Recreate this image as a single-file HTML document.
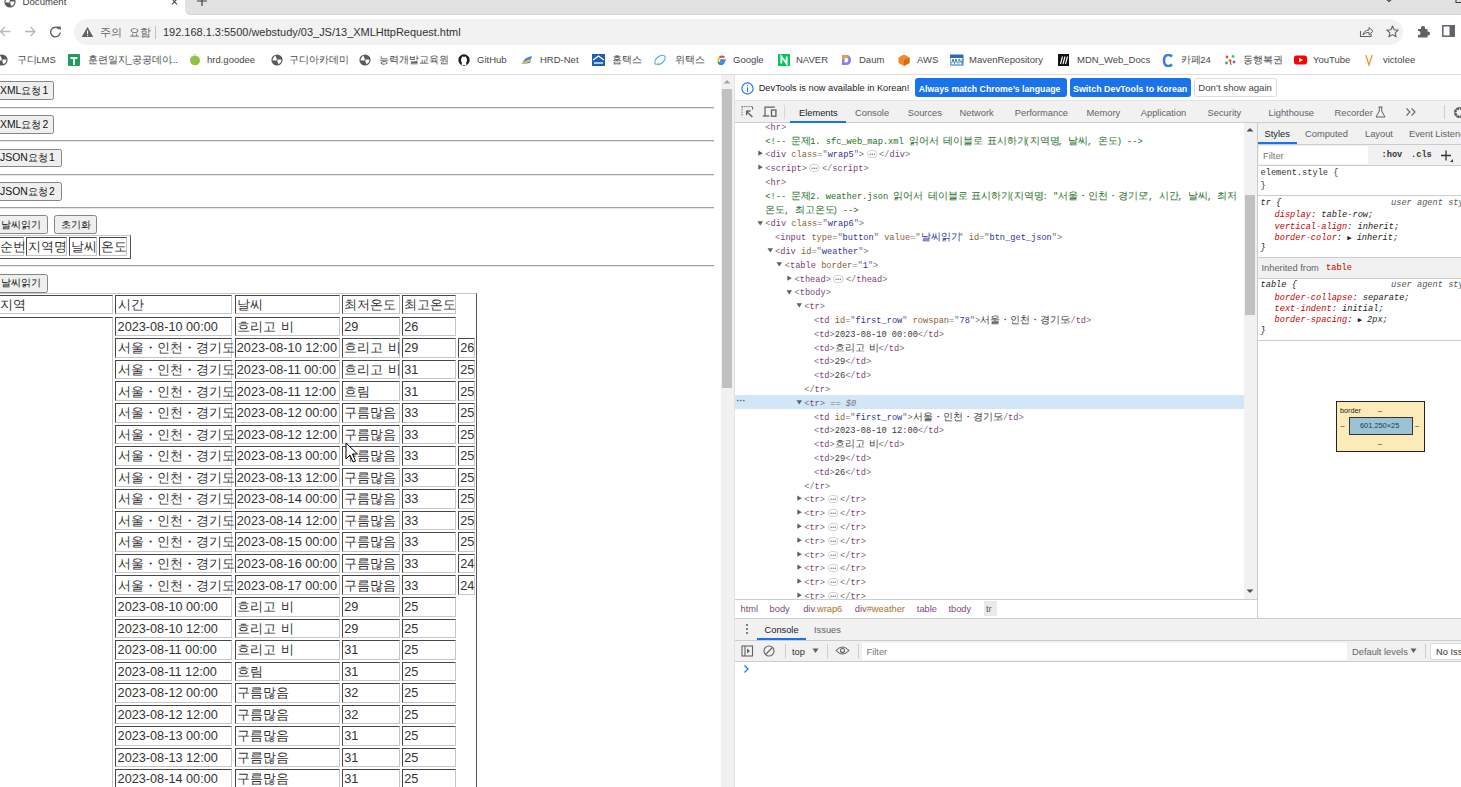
<!DOCTYPE html>
<html><head><meta charset="utf-8"><title>Document</title>
<style>
html,body{margin:0;padding:0;width:1461px;height:787px;overflow:hidden;background:#fff;position:relative}
.r{position:absolute;display:block}
.t{position:absolute;white-space:pre;}
.s{font-family:"Liberation Sans",sans-serif}
.m{font-family:"Liberation Mono",monospace}
.k{display:inline-block;white-space:pre;overflow:visible;vertical-align:baseline;line-height:0}
.ko .k{font-size:inherit!important}
.ko .kc{font-size:10.2px!important}
.dots{display:inline-block;vertical-align:-1px;margin:0 2px 0 2.5px}
</style></head><body>
<div class="r" style="left:185px;top:0px;width:1276px;height:15px;background:#e1e1e1;border-bottom:1px solid #d2d2d2;box-sizing:border-box;border-bottom-left-radius:6px"></div>
<svg class="r" style="left:3.5px;top:-4.5px;" width="13" height="13" viewBox="0 0 13 13"><defs><clipPath id="gt"><circle cx="6" cy="6" r="4.4"/></clipPath></defs><circle cx="6" cy="6" r="5.6" fill="#5a5a5a"/><g clip-path="url(#gt)"><path d="M0 6.6 L0 0 L5.4 0 Q4.2 2.2 5.2 3.6 Q6.2 4.6 5.4 6.6 Z M6.6 5.4 L12 5.4 L12 12 L6.6 12 Q7.8 9.8 6.8 8.4 Q5.8 7.4 6.6 5.4 Z" fill="#fff"/></g></svg>
<div class="t s" style="left:22.6px;top:-4.00px;font-size:9.6px;line-height:12px;color:#3c4043;">Document</div>
<svg class="r" style="left:171px;top:-2px;" width="7" height="8" viewBox="0 0 7 8"><path d="M1 1 L6 6.5 M6 1 L1 6.5" stroke="#3c4043" stroke-width="1.1"/></svg>
<svg class="r" style="left:196px;top:-4px;" width="12" height="11" viewBox="0 0 12 11"><path d="M6 0 V10 M1 5 H11" stroke="#3c4043" stroke-width="1.2"/></svg>
<svg class="r" style="left:1384px;top:-3px;" width="10" height="6" viewBox="0 0 10 6"><path d="M1 1 L5 4.5 L9 1" stroke="#3c4043" stroke-width="1.1" fill="none"/></svg>
<svg class="r" style="left:1455px;top:-4px;" width="6" height="8" viewBox="0 0 6 8"><path d="M1 0 V6.5 H6" stroke="#3c4043" stroke-width="1.1" fill="none"/></svg>
<svg class="r" style="left:-1px;top:25px;" width="13" height="13" viewBox="0 0 13 13"><path d="M11.5 6.5 H1.5 M6 2 L1.5 6.5 L6 11" stroke="#b5b7ba" stroke-width="1.3" fill="none"/></svg>
<svg class="r" style="left:23.5px;top:25px;" width="13" height="13" viewBox="0 0 13 13"><path d="M1 6.5 H11 M6.5 2 L11 6.5 L6.5 11" stroke="#b5b7ba" stroke-width="1.3" fill="none"/></svg>
<svg class="r" style="left:49px;top:25px;" width="13" height="13" viewBox="0 0 13 13"><path d="M10.3 4.2 A4.8 4.8 0 1 0 11.2 7.5" stroke="#5f6368" stroke-width="1.4" fill="none"/><path d="M8 1.5 L11.8 1.5 L11.8 5.3 Z" fill="#5f6368"/></svg>
<div class="r" style="left:74.3px;top:18.8px;width:1329px;height:26.2px;background:#f2f2f2;border-radius:13px"></div>
<svg class="r" style="left:81px;top:26px;" width="13" height="12" viewBox="0 0 13 12"><path d="M6.5 1 L12.3 11 H0.7 Z" fill="#5f6368"/><rect x="6" y="4.5" width="1.1" height="3.6" fill="#fff"/><rect x="6" y="9" width="1.1" height="1.1" fill="#fff"/></svg>
<div class="t s" style="left:100px;top:24.50px;font-size:10.6px;line-height:14px;color:#5f6368;"><span class="k" style="width:21.80px;font-size:13.78px">주의</span><span class="k" style="width:6.76px"> </span><span class="k" style="width:21.80px;font-size:13.78px">요함</span></div>
<div class="r" style="left:155px;top:25.5px;width:1px;height:13px;background:#bdc1c6"></div>
<div class="t s" style="left:163px;top:24.50px;font-size:10.97px;line-height:14px;color:#333;">192.168.1.3:5500/webstudy/03_JS/13_XMLHttpRequest.html</div>
<svg class="r" style="left:1359px;top:25px;" width="15" height="13" viewBox="0 0 15 13"><path d="M1.5 6 V11.5 H12 V9" stroke="#5f6368" stroke-width="1.1" fill="none"/><path d="M4 10 Q5 5 10 5 V2.5 L14 6.2 L10 9.8 V7.3 Q6 7.3 4 10 Z" stroke="#5f6368" stroke-width="1" fill="none"/></svg>
<svg class="r" style="left:1386px;top:24.5px;" width="13" height="13" viewBox="0 0 13 13"><path d="M6.5 1 L8.1 4.8 L12.2 5.1 L9.1 7.8 L10.1 11.8 L6.5 9.6 L2.9 11.8 L3.9 7.8 L0.8 5.1 L4.9 4.8 Z" stroke="#5f6368" stroke-width="1.1" fill="none" stroke-linejoin="round"/></svg>
<svg class="r" style="left:1416px;top:25px;" width="14" height="13" viewBox="0 0 14 13"><path d="M2 4 H5 Q4.5 1 7 1 Q9.5 1 9 4 H11.5 V6.5 Q14 6 14 8.5 Q14 11 11.5 10.5 V12.5 H2 V10 Q4.5 10.5 4.5 8 Q4.5 5.7 2 6 Z" fill="#5f6368"/></svg>
<svg class="r" style="left:1442px;top:25px;" width="13" height="12" viewBox="0 0 13 12"><rect x="0.8" y="0.8" width="11.4" height="10.4" stroke="#5f6368" stroke-width="1.5" fill="none"/><rect x="7.5" y="1" width="4.5" height="10" fill="#5f6368"/></svg>
<svg class="r" style="left:-4px;top:53.5px;" width="14" height="13" viewBox="0 0 14 13"><defs><clipPath id="gc"><circle cx="6" cy="6" r="4.4"/></clipPath></defs><circle cx="6" cy="6" r="5.6" fill="#5a5a5a"/><g clip-path="url(#gc)"><path d="M0 6.6 L0 0 L5.4 0 Q4.2 2.2 5.2 3.6 Q6.2 4.6 5.4 6.6 Z M6.6 5.4 L12 5.4 L12 12 L6.6 12 Q7.8 9.8 6.8 8.4 Q5.8 7.4 6.6 5.4 Z" fill="#fff"/></g></svg>
<div class="t s" style="left:17px;top:53.50px;font-size:9.5px;line-height:12px;color:#474747;"><span class="k" style="width:19.20px;font-size:12.35px">구디</span>LMS</div>
<svg class="r" style="left:68px;top:53.5px;" width="14" height="13" viewBox="0 0 14 13"><rect x="0" y="0" width="12" height="12" rx="1" fill="#1e9e5a"/><path d="M2.5 4 H9.5 M6 4 V11" stroke="#fff" stroke-width="1.8"/></svg>
<div class="t s" style="left:88px;top:53.50px;font-size:9.5px;line-height:12px;color:#474747;"><span class="k" style="width:38.40px;font-size:12.35px">훈련일지</span>_<span class="k" style="width:38.40px;font-size:12.35px">공공데이</span>...</div>
<svg class="r" style="left:189px;top:53.5px;" width="14" height="13" viewBox="0 0 14 13"><ellipse cx="6" cy="6.5" rx="5" ry="4.8" fill="#8cc43f"/><path d="M5 1.5 L6.5 0" stroke="#7a5" stroke-width="1"/></svg>
<div class="t s" style="left:207px;top:53.50px;font-size:9.5px;line-height:12px;color:#474747;">hrd.goodee</div>
<svg class="r" style="left:271px;top:53.5px;" width="14" height="13" viewBox="0 0 14 13"><defs><clipPath id="gc"><circle cx="6" cy="6" r="4.4"/></clipPath></defs><circle cx="6" cy="6" r="5.6" fill="#5a5a5a"/><g clip-path="url(#gc)"><path d="M0 6.6 L0 0 L5.4 0 Q4.2 2.2 5.2 3.6 Q6.2 4.6 5.4 6.6 Z M6.6 5.4 L12 5.4 L12 12 L6.6 12 Q7.8 9.8 6.8 8.4 Q5.8 7.4 6.6 5.4 Z" fill="#fff"/></g></svg>
<div class="t s" style="left:289px;top:53.50px;font-size:9.5px;line-height:12px;color:#474747;"><span class="k" style="width:57.60px;font-size:12.35px">구디아카데미</span></div>
<svg class="r" style="left:359px;top:53.5px;" width="14" height="13" viewBox="0 0 14 13"><defs><clipPath id="gc"><circle cx="6" cy="6" r="4.4"/></clipPath></defs><circle cx="6" cy="6" r="5.6" fill="#5a5a5a"/><g clip-path="url(#gc)"><path d="M0 6.6 L0 0 L5.4 0 Q4.2 2.2 5.2 3.6 Q6.2 4.6 5.4 6.6 Z M6.6 5.4 L12 5.4 L12 12 L6.6 12 Q7.8 9.8 6.8 8.4 Q5.8 7.4 6.6 5.4 Z" fill="#fff"/></g></svg>
<div class="t s" style="left:379px;top:53.50px;font-size:9.5px;line-height:12px;color:#474747;"><span class="k" style="width:67.20px;font-size:12.35px">능력개발교육원</span></div>
<svg class="r" style="left:458px;top:53.5px;" width="14" height="13" viewBox="0 0 14 13"><circle cx="6" cy="6" r="5.7" fill="#1b1f23"/><path d="M3.8 11 V8.5 Q3 7.5 3 6 Q3 4.2 4 3.6 Q4 2.5 4.3 2.2 Q5 2.4 5.6 3 H6.4 Q7 2.4 7.7 2.2 Q8 2.5 8 3.6 Q9 4.2 9 6 Q9 7.5 8.2 8.5 V11" fill="#fff"/><circle cx="6" cy="6" r="4.3" fill="#1b1f23" opacity="0"/></svg>
<div class="t s" style="left:477px;top:53.50px;font-size:9.5px;line-height:12px;color:#474747;">GitHub</div>
<svg class="r" style="left:521px;top:53.5px;" width="14" height="13" viewBox="0 0 14 13"><path d="M1 10 Q3 3 11 2 L9 9 Z" fill="#3b8de0"/><path d="M2 9 L10 6" stroke="#f0c030" stroke-width="2"/></svg>
<div class="t s" style="left:540px;top:53.50px;font-size:9.5px;line-height:12px;color:#474747;">HRD-Net</div>
<svg class="r" style="left:592px;top:53.5px;" width="14" height="13" viewBox="0 0 14 13"><rect x="0" y="0" width="13" height="12" fill="#1f5fae"/><path d="M1 6 L6.5 2 L12 6" stroke="#fff" stroke-width="1.3" fill="none"/><path d="M2 9 H11" stroke="#fff" stroke-width="1.3"/></svg>
<div class="t s" style="left:612px;top:53.50px;font-size:9.5px;line-height:12px;color:#474747;"><span class="k" style="width:28.80px;font-size:12.35px">홈택스</span></div>
<svg class="r" style="left:653px;top:53.5px;" width="14" height="13" viewBox="0 0 14 13"><ellipse cx="7" cy="6" rx="6" ry="3.5" transform="rotate(-40 7 6)" stroke="#55b6e0" stroke-width="1.3" fill="none"/><path d="M2 10 Q4 11 6 9" stroke="#b9d441" stroke-width="1.3" fill="none"/></svg>
<div class="t s" style="left:675px;top:53.50px;font-size:9.5px;line-height:12px;color:#474747;"><span class="k" style="width:28.80px;font-size:12.35px">위택스</span></div>
<svg class="r" style="left:715px;top:53.5px;" width="14" height="13" viewBox="0 0 14 13"><path d="M10.8 6.2 H6 V7.8 H9 Q8.5 10 6 10 Q3.8 10 3.3 7.5" stroke="#4285f4" stroke-width="1.8" fill="none"/><path d="M3.3 7.5 Q3 5 4.5 3.4" stroke="#fbbc05" stroke-width="1.8" fill="none"/><path d="M4.5 3.4 Q7 1.6 9.3 3.5" stroke="#ea4335" stroke-width="1.8" fill="none"/><path d="M3.4 8.2 Q4.5 10.6 7.5 10.2" stroke="#34a853" stroke-width="1.8" fill="none"/></svg>
<div class="t s" style="left:733px;top:53.50px;font-size:9.5px;line-height:12px;color:#474747;">Google</div>
<svg class="r" style="left:778px;top:53.5px;" width="14" height="13" viewBox="0 0 14 13"><rect x="0" y="0" width="12" height="12" fill="#03c75a"/><path d="M3.3 9.5 V2.5 L8.7 9.5 V2.5" stroke="#fff" stroke-width="1.8" fill="none"/></svg>
<div class="t s" style="left:796px;top:53.50px;font-size:9.5px;line-height:12px;color:#474747;">NAVER</div>
<svg class="r" style="left:840px;top:53.5px;" width="14" height="13" viewBox="0 0 14 13"><path d="M2 1 H6 Q11 1 11 6 Q11 11 6 11 H2 Z" fill="#8b7cf6"/><path d="M4.5 3.5 H6 Q8.3 3.5 8.3 6 Q8.3 8.5 6 8.5 H4.5 Z" fill="#fff"/><path d="M2 1 H6 Q8 1 9.5 2.5 L2 6Z" fill="#f5a623" opacity=".8"/></svg>
<div class="t s" style="left:859px;top:53.50px;font-size:9.5px;line-height:12px;color:#474747;">Daum</div>
<svg class="r" style="left:898px;top:53.5px;" width="14" height="13" viewBox="0 0 14 13"><path d="M6 0.5 L11.5 3.5 V9 L6 12 L0.5 9 V3.5 Z" fill="#f08a24"/><path d="M6 6 L11.5 3.5 V9 L6 12 Z" fill="#d96b10"/></svg>
<div class="t s" style="left:917px;top:53.50px;font-size:9.5px;line-height:12px;color:#474747;">AWS</div>
<svg class="r" style="left:950px;top:53.5px;" width="14" height="13" viewBox="0 0 14 13"><rect x="0" y="1" width="13" height="10" fill="#fff" stroke="#2b6cb0" stroke-width="1"/><rect x="0" y="1" width="13" height="3" fill="#2b6cb0"/><path d="M1.5 9.5 L3 5 L4.5 9.5 L6 5 L7.5 9.5 M9 9.5 V5 L12 9.5 V5" stroke="#2b6cb0" stroke-width=".9" fill="none"/></svg>
<div class="t s" style="left:969px;top:53.50px;font-size:9.5px;line-height:12px;color:#474747;">MavenRepository</div>
<svg class="r" style="left:1058px;top:53.5px;" width="14" height="13" viewBox="0 0 14 13"><rect x="0" y="0" width="11" height="12" fill="#111"/><path d="M2.5 10 L4.5 2.5 M5 10 L7 2.5 M7.5 10 L9.5 2.5" stroke="#fff" stroke-width="1.1"/></svg>
<div class="t s" style="left:1077px;top:53.50px;font-size:9.5px;line-height:12px;color:#474747;">MDN_Web_Docs</div>
<svg class="r" style="left:1162px;top:53.5px;" width="14" height="13" viewBox="0 0 14 13"><path d="M10 2.5 Q8.5 1 6.5 1 Q2 1 2 6.5 Q2 12 6.5 12 Q8.5 12 10 10.5" stroke="#3f7de0" stroke-width="2.6" fill="none"/></svg>
<div class="t s" style="left:1181px;top:53.50px;font-size:9.5px;line-height:12px;color:#474747;"><span class="k" style="width:19.20px;font-size:12.35px">카페</span>24</div>
<svg class="r" style="left:1224px;top:53.5px;" width="14" height="13" viewBox="0 0 14 13"><circle cx="3" cy="3" r="1.4" fill="#e74c3c"/><circle cx="9" cy="2.5" r="1.4" fill="#2ecc71"/><circle cx="6" cy="6.5" r="1.6" fill="#f39c12"/><circle cx="2.5" cy="9" r="1.4" fill="#3498db"/><circle cx="10" cy="8" r="1.4" fill="#9b59b6"/><path d="M6 6 L7 11" stroke="#c0392b" stroke-width="1"/></svg>
<div class="t s" style="left:1243px;top:53.50px;font-size:9.5px;line-height:12px;color:#474747;"><span class="k" style="width:38.40px;font-size:12.35px">동행복권</span></div>
<svg class="r" style="left:1294px;top:53.5px;" width="14" height="13" viewBox="0 0 14 13"><rect x="0" y="1.5" width="13" height="9" rx="2.2" fill="#f00"/><path d="M5 3.7 L9 6 L5 8.3 Z" fill="#fff"/></svg>
<div class="t s" style="left:1313px;top:53.50px;font-size:9.5px;line-height:12px;color:#474747;">YouTube</div>
<svg class="r" style="left:1365px;top:53.5px;" width="14" height="13" viewBox="0 0 14 13"><path d="M0.8 1 L4 11 L7.2 1" stroke="#f28c28" stroke-width="1.2" fill="none"/></svg>
<div class="t s" style="left:1383px;top:53.50px;font-size:9.5px;line-height:12px;color:#474747;">victolee</div>
<div class="r" style="left:0px;top:74px;width:1461px;height:1px;background:#dadce0"></div>
<div class="r" style="left:0;top:75px;width:720px;height:712px;background:#fff;overflow:hidden" id="pg">
<div class="r" style="left:-4px;top:31.70px;width:718px;height:1px;background:#a0a0a0"></div>
<div class="r" style="left:-4px;top:32.70px;width:718px;height:1px;background:#e6e6e6"></div>
<div class="r" style="left:-4px;top:65.00px;width:718px;height:1px;background:#a0a0a0"></div>
<div class="r" style="left:-4px;top:66.00px;width:718px;height:1px;background:#e6e6e6"></div>
<div class="r" style="left:-4px;top:98.70px;width:718px;height:1px;background:#a0a0a0"></div>
<div class="r" style="left:-4px;top:99.70px;width:718px;height:1px;background:#e6e6e6"></div>
<div class="r" style="left:-4px;top:131.60px;width:718px;height:1px;background:#a0a0a0"></div>
<div class="r" style="left:-4px;top:132.60px;width:718px;height:1px;background:#e6e6e6"></div>
<div class="r" style="left:-4px;top:189.80px;width:718px;height:1px;background:#a0a0a0"></div>
<div class="r" style="left:-4px;top:190.80px;width:718px;height:1px;background:#e6e6e6"></div>
<div class="r" style="left:-10px;top:6.30px;width:64.3px;height:19.200000000000003px;background:#efefef;border:1px solid #858585;border-radius:2.5px;box-sizing:border-box"></div>
<div class="t s" style="left:0px;top:7.90px;font-size:10.4px;line-height:16px;color:#111;">XML<span class="k" style="width:21.20px;font-size:13.52px">요청</span>1</div>
<div class="r" style="left:-10px;top:40.30px;width:64.3px;height:18.39999999999999px;background:#efefef;border:1px solid #858585;border-radius:2.5px;box-sizing:border-box"></div>
<div class="t s" style="left:0px;top:41.50px;font-size:10.4px;line-height:16px;color:#111;">XML<span class="k" style="width:21.20px;font-size:13.52px">요청</span>2</div>
<div class="r" style="left:-10px;top:73.60px;width:71.6px;height:18.599999999999994px;background:#efefef;border:1px solid #858585;border-radius:2.5px;box-sizing:border-box"></div>
<div class="t s" style="left:0px;top:74.90px;font-size:10.4px;line-height:16px;color:#111;">JSON<span class="k" style="width:21.20px;font-size:13.52px">요청</span>1</div>
<div class="r" style="left:-10px;top:107.40px;width:71.6px;height:18.19999999999999px;background:#efefef;border:1px solid #858585;border-radius:2.5px;box-sizing:border-box"></div>
<div class="t s" style="left:0px;top:108.50px;font-size:10.4px;line-height:16px;color:#111;">JSON<span class="k" style="width:21.20px;font-size:13.52px">요청</span>2</div>
<div class="r" style="left:-10px;top:140.40px;width:57.9px;height:18.400000000000006px;background:#efefef;border:1px solid #858585;border-radius:2.5px;box-sizing:border-box"></div>
<div class="t s" style="left:1px;top:141.60px;font-size:10.4px;line-height:16px;color:#111;"><span class="k" style="width:42.40px;font-size:13.52px">날씨읽기</span></div>
<div class="r" style="left:53.7px;top:140.40px;width:43.7px;height:18.400000000000006px;background:#efefef;border:1px solid #858585;border-radius:2.5px;box-sizing:border-box"></div>
<div class="t s" style="left:60.5px;top:141.60px;font-size:10.4px;line-height:16px;color:#111;"><span class="k" style="width:31.80px;font-size:13.52px">초기화</span></div>
<div class="r" style="left:-10px;top:198.50px;width:58px;height:19.100000000000023px;background:#efefef;border:1px solid #858585;border-radius:2.5px;box-sizing:border-box"></div>
<div class="t s" style="left:1px;top:200.05px;font-size:10.4px;line-height:16px;color:#111;"><span class="k" style="width:42.40px;font-size:13.52px">날씨읽기</span></div>
<div class="r" style="left:-10px;top:159.50px;width:140.5px;height:24px;border:1px solid;border-color:#c6c6c6 #555 #555 #c6c6c6;box-sizing:border-box"></div>
<div class="r" style="left:-10px;top:162.00px;width:34.4px;height:19.4px;border:1px solid;border-color:#474747 #c6c6c6 #c6c6c6 #474747;box-sizing:border-box"></div>
<div class="t s" style="left:0px;top:163.80px;font-size:12.7px;line-height:16px;color:#333;"><span class="k" style="width:24.40px;font-size:16.51px">순번</span></div>
<div class="r" style="left:26px;top:162.00px;width:41.400000000000006px;height:19.4px;border:1px solid;border-color:#474747 #c6c6c6 #c6c6c6 #474747;box-sizing:border-box"></div>
<div class="t s" style="left:27.6px;top:163.80px;font-size:12.7px;line-height:16px;color:#333;"><span class="k" style="width:36.60px;font-size:16.51px">지역명</span></div>
<div class="r" style="left:69.2px;top:162.00px;width:28.200000000000003px;height:19.4px;border:1px solid;border-color:#474747 #c6c6c6 #c6c6c6 #474747;box-sizing:border-box"></div>
<div class="t s" style="left:70.8px;top:163.80px;font-size:12.7px;line-height:16px;color:#333;"><span class="k" style="width:24.40px;font-size:16.51px">날씨</span></div>
<div class="r" style="left:99.1px;top:162.00px;width:28.10000000000001px;height:19.4px;border:1px solid;border-color:#474747 #c6c6c6 #c6c6c6 #474747;box-sizing:border-box"></div>
<div class="t s" style="left:100.69999999999999px;top:163.80px;font-size:12.7px;line-height:16px;color:#333;"><span class="k" style="width:24.40px;font-size:16.51px">온도</span></div>
<div class="r" style="left:-10px;top:217.70px;width:486.5px;height:520px;border:1px solid;border-color:#c6c6c6 #555 #555 #c6c6c6;box-sizing:border-box"></div>
<div class="r" style="left:-10px;top:220.40px;width:123.4px;height:19.0px;border:1px solid;border-color:#474747 #c6c6c6 #c6c6c6 #474747;box-sizing:border-box"></div>
<div class="t s" style="left:0px;top:222.20px;font-size:12.7px;line-height:16px;color:#333;"><span class="k" style="width:24.40px;font-size:16.51px">지역</span></div>
<div class="r" style="left:115.4px;top:220.40px;width:117.0px;height:19.0px;border:1px solid;border-color:#474747 #c6c6c6 #c6c6c6 #474747;box-sizing:border-box"></div>
<div class="t s" style="left:117.60000000000001px;top:222.20px;font-size:12.7px;line-height:16px;color:#333;"><span class="k" style="width:24.40px;font-size:16.51px">시간</span></div>
<div class="r" style="left:234.6px;top:220.40px;width:105.00000000000003px;height:19.0px;border:1px solid;border-color:#474747 #c6c6c6 #c6c6c6 #474747;box-sizing:border-box"></div>
<div class="t s" style="left:236.79999999999998px;top:222.20px;font-size:12.7px;line-height:16px;color:#333;"><span class="k" style="width:24.40px;font-size:16.51px">날씨</span></div>
<div class="r" style="left:342px;top:220.40px;width:58.39999999999998px;height:19.0px;border:1px solid;border-color:#474747 #c6c6c6 #c6c6c6 #474747;box-sizing:border-box"></div>
<div class="t s" style="left:344.2px;top:222.20px;font-size:12.7px;line-height:16px;color:#333;"><span class="k" style="width:48.80px;font-size:16.51px">최저온도</span></div>
<div class="r" style="left:402px;top:220.40px;width:54.19999999999999px;height:19.0px;border:1px solid;border-color:#474747 #c6c6c6 #c6c6c6 #474747;box-sizing:border-box"></div>
<div class="t s" style="left:404.2px;top:222.20px;font-size:12.7px;line-height:16px;color:#333;"><span class="k" style="width:48.80px;font-size:16.51px">최고온도</span></div>
<div class="r" style="left:-10px;top:241.80px;width:123.4px;height:520px;border:1px solid;border-color:#474747 #c6c6c6 #c6c6c6 #474747;box-sizing:border-box"></div>
<div class="r" style="left:115.4px;top:241.80px;width:117.0px;height:19.600000000000023px;border:1px solid;border-color:#474747 #c6c6c6 #c6c6c6 #474747;box-sizing:border-box"></div>
<div class="t s" style="left:117.60000000000001px;top:243.90px;font-size:12.7px;line-height:16px;color:#333;">2023-08-10 00:00</div>
<div class="r" style="left:234.6px;top:241.80px;width:105.00000000000003px;height:19.600000000000023px;border:1px solid;border-color:#474747 #c6c6c6 #c6c6c6 #474747;box-sizing:border-box"></div>
<div class="t s" style="left:236.79999999999998px;top:243.90px;font-size:12.7px;line-height:16px;color:#333;"><span class="k" style="width:36.60px;font-size:16.51px">흐리고</span><span class="k" style="width:7.56px"> </span><span class="k" style="width:12.20px;font-size:16.51px">비</span></div>
<div class="r" style="left:342px;top:241.80px;width:58.39999999999998px;height:19.600000000000023px;border:1px solid;border-color:#474747 #c6c6c6 #c6c6c6 #474747;box-sizing:border-box"></div>
<div class="t s" style="left:344.2px;top:243.90px;font-size:12.7px;line-height:16px;color:#333;">29</div>
<div class="r" style="left:402px;top:241.80px;width:54.19999999999999px;height:19.600000000000023px;border:1px solid;border-color:#474747 #c6c6c6 #c6c6c6 #474747;box-sizing:border-box"></div>
<div class="t s" style="left:404.2px;top:243.90px;font-size:12.7px;line-height:16px;color:#333;">26</div>
<div class="r" style="left:115.4px;top:263.35px;width:117.0px;height:19.600000000000023px;border:1px solid;border-color:#474747 #c6c6c6 #c6c6c6 #474747;box-sizing:border-box"></div>
<div class="t s" style="left:117.60000000000001px;top:265.45px;font-size:12.7px;line-height:16px;color:#333;"><span class="k" style="width:109.80px;font-size:16.51px">서울・인천・경기도</span></div>
<div class="r" style="left:234.6px;top:263.35px;width:105.00000000000003px;height:19.600000000000023px;border:1px solid;border-color:#474747 #c6c6c6 #c6c6c6 #474747;box-sizing:border-box"></div>
<div class="t s" style="left:236.79999999999998px;top:265.45px;font-size:12.7px;line-height:16px;color:#333;">2023-08-10 12:00</div>
<div class="r" style="left:342px;top:263.35px;width:58.39999999999998px;height:19.600000000000023px;border:1px solid;border-color:#474747 #c6c6c6 #c6c6c6 #474747;box-sizing:border-box"></div>
<div class="t s" style="left:344.2px;top:265.45px;font-size:12.7px;line-height:16px;color:#333;"><span class="k" style="width:36.60px;font-size:16.51px">흐리고</span><span class="k" style="width:7.56px"> </span><span class="k" style="width:12.20px;font-size:16.51px">비</span></div>
<div class="r" style="left:402px;top:263.35px;width:54.19999999999999px;height:19.600000000000023px;border:1px solid;border-color:#474747 #c6c6c6 #c6c6c6 #474747;box-sizing:border-box"></div>
<div class="t s" style="left:404.2px;top:265.45px;font-size:12.7px;line-height:16px;color:#333;">29</div>
<div class="r" style="left:458.1px;top:263.35px;width:16.69999999999999px;height:19.600000000000023px;border:1px solid;border-color:#474747 #c6c6c6 #c6c6c6 #474747;box-sizing:border-box"></div>
<div class="t s" style="left:460.3px;top:265.45px;font-size:12.7px;line-height:16px;color:#333;">26</div>
<div class="r" style="left:115.4px;top:284.90px;width:117.0px;height:19.600000000000023px;border:1px solid;border-color:#474747 #c6c6c6 #c6c6c6 #474747;box-sizing:border-box"></div>
<div class="t s" style="left:117.60000000000001px;top:287.00px;font-size:12.7px;line-height:16px;color:#333;"><span class="k" style="width:109.80px;font-size:16.51px">서울・인천・경기도</span></div>
<div class="r" style="left:234.6px;top:284.90px;width:105.00000000000003px;height:19.600000000000023px;border:1px solid;border-color:#474747 #c6c6c6 #c6c6c6 #474747;box-sizing:border-box"></div>
<div class="t s" style="left:236.79999999999998px;top:287.00px;font-size:12.7px;line-height:16px;color:#333;">2023-08-11 00:00</div>
<div class="r" style="left:342px;top:284.90px;width:58.39999999999998px;height:19.600000000000023px;border:1px solid;border-color:#474747 #c6c6c6 #c6c6c6 #474747;box-sizing:border-box"></div>
<div class="t s" style="left:344.2px;top:287.00px;font-size:12.7px;line-height:16px;color:#333;"><span class="k" style="width:36.60px;font-size:16.51px">흐리고</span><span class="k" style="width:7.56px"> </span><span class="k" style="width:12.20px;font-size:16.51px">비</span></div>
<div class="r" style="left:402px;top:284.90px;width:54.19999999999999px;height:19.600000000000023px;border:1px solid;border-color:#474747 #c6c6c6 #c6c6c6 #474747;box-sizing:border-box"></div>
<div class="t s" style="left:404.2px;top:287.00px;font-size:12.7px;line-height:16px;color:#333;">31</div>
<div class="r" style="left:458.1px;top:284.90px;width:16.69999999999999px;height:19.600000000000023px;border:1px solid;border-color:#474747 #c6c6c6 #c6c6c6 #474747;box-sizing:border-box"></div>
<div class="t s" style="left:460.3px;top:287.00px;font-size:12.7px;line-height:16px;color:#333;">25</div>
<div class="r" style="left:115.4px;top:306.45px;width:117.0px;height:19.600000000000023px;border:1px solid;border-color:#474747 #c6c6c6 #c6c6c6 #474747;box-sizing:border-box"></div>
<div class="t s" style="left:117.60000000000001px;top:308.55px;font-size:12.7px;line-height:16px;color:#333;"><span class="k" style="width:109.80px;font-size:16.51px">서울・인천・경기도</span></div>
<div class="r" style="left:234.6px;top:306.45px;width:105.00000000000003px;height:19.600000000000023px;border:1px solid;border-color:#474747 #c6c6c6 #c6c6c6 #474747;box-sizing:border-box"></div>
<div class="t s" style="left:236.79999999999998px;top:308.55px;font-size:12.7px;line-height:16px;color:#333;">2023-08-11 12:00</div>
<div class="r" style="left:342px;top:306.45px;width:58.39999999999998px;height:19.600000000000023px;border:1px solid;border-color:#474747 #c6c6c6 #c6c6c6 #474747;box-sizing:border-box"></div>
<div class="t s" style="left:344.2px;top:308.55px;font-size:12.7px;line-height:16px;color:#333;"><span class="k" style="width:24.40px;font-size:16.51px">흐림</span></div>
<div class="r" style="left:402px;top:306.45px;width:54.19999999999999px;height:19.600000000000023px;border:1px solid;border-color:#474747 #c6c6c6 #c6c6c6 #474747;box-sizing:border-box"></div>
<div class="t s" style="left:404.2px;top:308.55px;font-size:12.7px;line-height:16px;color:#333;">31</div>
<div class="r" style="left:458.1px;top:306.45px;width:16.69999999999999px;height:19.600000000000023px;border:1px solid;border-color:#474747 #c6c6c6 #c6c6c6 #474747;box-sizing:border-box"></div>
<div class="t s" style="left:460.3px;top:308.55px;font-size:12.7px;line-height:16px;color:#333;">25</div>
<div class="r" style="left:115.4px;top:328.00px;width:117.0px;height:19.600000000000023px;border:1px solid;border-color:#474747 #c6c6c6 #c6c6c6 #474747;box-sizing:border-box"></div>
<div class="t s" style="left:117.60000000000001px;top:330.10px;font-size:12.7px;line-height:16px;color:#333;"><span class="k" style="width:109.80px;font-size:16.51px">서울・인천・경기도</span></div>
<div class="r" style="left:234.6px;top:328.00px;width:105.00000000000003px;height:19.600000000000023px;border:1px solid;border-color:#474747 #c6c6c6 #c6c6c6 #474747;box-sizing:border-box"></div>
<div class="t s" style="left:236.79999999999998px;top:330.10px;font-size:12.7px;line-height:16px;color:#333;">2023-08-12 00:00</div>
<div class="r" style="left:342px;top:328.00px;width:58.39999999999998px;height:19.600000000000023px;border:1px solid;border-color:#474747 #c6c6c6 #c6c6c6 #474747;box-sizing:border-box"></div>
<div class="t s" style="left:344.2px;top:330.10px;font-size:12.7px;line-height:16px;color:#333;"><span class="k" style="width:48.80px;font-size:16.51px">구름많음</span></div>
<div class="r" style="left:402px;top:328.00px;width:54.19999999999999px;height:19.600000000000023px;border:1px solid;border-color:#474747 #c6c6c6 #c6c6c6 #474747;box-sizing:border-box"></div>
<div class="t s" style="left:404.2px;top:330.10px;font-size:12.7px;line-height:16px;color:#333;">33</div>
<div class="r" style="left:458.1px;top:328.00px;width:16.69999999999999px;height:19.600000000000023px;border:1px solid;border-color:#474747 #c6c6c6 #c6c6c6 #474747;box-sizing:border-box"></div>
<div class="t s" style="left:460.3px;top:330.10px;font-size:12.7px;line-height:16px;color:#333;">25</div>
<div class="r" style="left:115.4px;top:349.55px;width:117.0px;height:19.600000000000023px;border:1px solid;border-color:#474747 #c6c6c6 #c6c6c6 #474747;box-sizing:border-box"></div>
<div class="t s" style="left:117.60000000000001px;top:351.65px;font-size:12.7px;line-height:16px;color:#333;"><span class="k" style="width:109.80px;font-size:16.51px">서울・인천・경기도</span></div>
<div class="r" style="left:234.6px;top:349.55px;width:105.00000000000003px;height:19.600000000000023px;border:1px solid;border-color:#474747 #c6c6c6 #c6c6c6 #474747;box-sizing:border-box"></div>
<div class="t s" style="left:236.79999999999998px;top:351.65px;font-size:12.7px;line-height:16px;color:#333;">2023-08-12 12:00</div>
<div class="r" style="left:342px;top:349.55px;width:58.39999999999998px;height:19.600000000000023px;border:1px solid;border-color:#474747 #c6c6c6 #c6c6c6 #474747;box-sizing:border-box"></div>
<div class="t s" style="left:344.2px;top:351.65px;font-size:12.7px;line-height:16px;color:#333;"><span class="k" style="width:48.80px;font-size:16.51px">구름많음</span></div>
<div class="r" style="left:402px;top:349.55px;width:54.19999999999999px;height:19.600000000000023px;border:1px solid;border-color:#474747 #c6c6c6 #c6c6c6 #474747;box-sizing:border-box"></div>
<div class="t s" style="left:404.2px;top:351.65px;font-size:12.7px;line-height:16px;color:#333;">33</div>
<div class="r" style="left:458.1px;top:349.55px;width:16.69999999999999px;height:19.600000000000023px;border:1px solid;border-color:#474747 #c6c6c6 #c6c6c6 #474747;box-sizing:border-box"></div>
<div class="t s" style="left:460.3px;top:351.65px;font-size:12.7px;line-height:16px;color:#333;">25</div>
<div class="r" style="left:115.4px;top:371.10px;width:117.0px;height:19.600000000000023px;border:1px solid;border-color:#474747 #c6c6c6 #c6c6c6 #474747;box-sizing:border-box"></div>
<div class="t s" style="left:117.60000000000001px;top:373.20px;font-size:12.7px;line-height:16px;color:#333;"><span class="k" style="width:109.80px;font-size:16.51px">서울・인천・경기도</span></div>
<div class="r" style="left:234.6px;top:371.10px;width:105.00000000000003px;height:19.600000000000023px;border:1px solid;border-color:#474747 #c6c6c6 #c6c6c6 #474747;box-sizing:border-box"></div>
<div class="t s" style="left:236.79999999999998px;top:373.20px;font-size:12.7px;line-height:16px;color:#333;">2023-08-13 00:00</div>
<div class="r" style="left:342px;top:371.10px;width:58.39999999999998px;height:19.600000000000023px;border:1px solid;border-color:#474747 #c6c6c6 #c6c6c6 #474747;box-sizing:border-box"></div>
<div class="t s" style="left:344.2px;top:373.20px;font-size:12.7px;line-height:16px;color:#333;"><span class="k" style="width:48.80px;font-size:16.51px">구름많음</span></div>
<div class="r" style="left:402px;top:371.10px;width:54.19999999999999px;height:19.600000000000023px;border:1px solid;border-color:#474747 #c6c6c6 #c6c6c6 #474747;box-sizing:border-box"></div>
<div class="t s" style="left:404.2px;top:373.20px;font-size:12.7px;line-height:16px;color:#333;">33</div>
<div class="r" style="left:458.1px;top:371.10px;width:16.69999999999999px;height:19.600000000000023px;border:1px solid;border-color:#474747 #c6c6c6 #c6c6c6 #474747;box-sizing:border-box"></div>
<div class="t s" style="left:460.3px;top:373.20px;font-size:12.7px;line-height:16px;color:#333;">25</div>
<div class="r" style="left:115.4px;top:392.65px;width:117.0px;height:19.600000000000023px;border:1px solid;border-color:#474747 #c6c6c6 #c6c6c6 #474747;box-sizing:border-box"></div>
<div class="t s" style="left:117.60000000000001px;top:394.75px;font-size:12.7px;line-height:16px;color:#333;"><span class="k" style="width:109.80px;font-size:16.51px">서울・인천・경기도</span></div>
<div class="r" style="left:234.6px;top:392.65px;width:105.00000000000003px;height:19.600000000000023px;border:1px solid;border-color:#474747 #c6c6c6 #c6c6c6 #474747;box-sizing:border-box"></div>
<div class="t s" style="left:236.79999999999998px;top:394.75px;font-size:12.7px;line-height:16px;color:#333;">2023-08-13 12:00</div>
<div class="r" style="left:342px;top:392.65px;width:58.39999999999998px;height:19.600000000000023px;border:1px solid;border-color:#474747 #c6c6c6 #c6c6c6 #474747;box-sizing:border-box"></div>
<div class="t s" style="left:344.2px;top:394.75px;font-size:12.7px;line-height:16px;color:#333;"><span class="k" style="width:48.80px;font-size:16.51px">구름많음</span></div>
<div class="r" style="left:402px;top:392.65px;width:54.19999999999999px;height:19.600000000000023px;border:1px solid;border-color:#474747 #c6c6c6 #c6c6c6 #474747;box-sizing:border-box"></div>
<div class="t s" style="left:404.2px;top:394.75px;font-size:12.7px;line-height:16px;color:#333;">33</div>
<div class="r" style="left:458.1px;top:392.65px;width:16.69999999999999px;height:19.600000000000023px;border:1px solid;border-color:#474747 #c6c6c6 #c6c6c6 #474747;box-sizing:border-box"></div>
<div class="t s" style="left:460.3px;top:394.75px;font-size:12.7px;line-height:16px;color:#333;">25</div>
<div class="r" style="left:115.4px;top:414.20px;width:117.0px;height:19.600000000000023px;border:1px solid;border-color:#474747 #c6c6c6 #c6c6c6 #474747;box-sizing:border-box"></div>
<div class="t s" style="left:117.60000000000001px;top:416.30px;font-size:12.7px;line-height:16px;color:#333;"><span class="k" style="width:109.80px;font-size:16.51px">서울・인천・경기도</span></div>
<div class="r" style="left:234.6px;top:414.20px;width:105.00000000000003px;height:19.600000000000023px;border:1px solid;border-color:#474747 #c6c6c6 #c6c6c6 #474747;box-sizing:border-box"></div>
<div class="t s" style="left:236.79999999999998px;top:416.30px;font-size:12.7px;line-height:16px;color:#333;">2023-08-14 00:00</div>
<div class="r" style="left:342px;top:414.20px;width:58.39999999999998px;height:19.600000000000023px;border:1px solid;border-color:#474747 #c6c6c6 #c6c6c6 #474747;box-sizing:border-box"></div>
<div class="t s" style="left:344.2px;top:416.30px;font-size:12.7px;line-height:16px;color:#333;"><span class="k" style="width:48.80px;font-size:16.51px">구름많음</span></div>
<div class="r" style="left:402px;top:414.20px;width:54.19999999999999px;height:19.600000000000023px;border:1px solid;border-color:#474747 #c6c6c6 #c6c6c6 #474747;box-sizing:border-box"></div>
<div class="t s" style="left:404.2px;top:416.30px;font-size:12.7px;line-height:16px;color:#333;">33</div>
<div class="r" style="left:458.1px;top:414.20px;width:16.69999999999999px;height:19.600000000000023px;border:1px solid;border-color:#474747 #c6c6c6 #c6c6c6 #474747;box-sizing:border-box"></div>
<div class="t s" style="left:460.3px;top:416.30px;font-size:12.7px;line-height:16px;color:#333;">25</div>
<div class="r" style="left:115.4px;top:435.75px;width:117.0px;height:19.600000000000023px;border:1px solid;border-color:#474747 #c6c6c6 #c6c6c6 #474747;box-sizing:border-box"></div>
<div class="t s" style="left:117.60000000000001px;top:437.85px;font-size:12.7px;line-height:16px;color:#333;"><span class="k" style="width:109.80px;font-size:16.51px">서울・인천・경기도</span></div>
<div class="r" style="left:234.6px;top:435.75px;width:105.00000000000003px;height:19.600000000000023px;border:1px solid;border-color:#474747 #c6c6c6 #c6c6c6 #474747;box-sizing:border-box"></div>
<div class="t s" style="left:236.79999999999998px;top:437.85px;font-size:12.7px;line-height:16px;color:#333;">2023-08-14 12:00</div>
<div class="r" style="left:342px;top:435.75px;width:58.39999999999998px;height:19.600000000000023px;border:1px solid;border-color:#474747 #c6c6c6 #c6c6c6 #474747;box-sizing:border-box"></div>
<div class="t s" style="left:344.2px;top:437.85px;font-size:12.7px;line-height:16px;color:#333;"><span class="k" style="width:48.80px;font-size:16.51px">구름많음</span></div>
<div class="r" style="left:402px;top:435.75px;width:54.19999999999999px;height:19.600000000000023px;border:1px solid;border-color:#474747 #c6c6c6 #c6c6c6 #474747;box-sizing:border-box"></div>
<div class="t s" style="left:404.2px;top:437.85px;font-size:12.7px;line-height:16px;color:#333;">33</div>
<div class="r" style="left:458.1px;top:435.75px;width:16.69999999999999px;height:19.600000000000023px;border:1px solid;border-color:#474747 #c6c6c6 #c6c6c6 #474747;box-sizing:border-box"></div>
<div class="t s" style="left:460.3px;top:437.85px;font-size:12.7px;line-height:16px;color:#333;">25</div>
<div class="r" style="left:115.4px;top:457.30px;width:117.0px;height:19.600000000000023px;border:1px solid;border-color:#474747 #c6c6c6 #c6c6c6 #474747;box-sizing:border-box"></div>
<div class="t s" style="left:117.60000000000001px;top:459.40px;font-size:12.7px;line-height:16px;color:#333;"><span class="k" style="width:109.80px;font-size:16.51px">서울・인천・경기도</span></div>
<div class="r" style="left:234.6px;top:457.30px;width:105.00000000000003px;height:19.600000000000023px;border:1px solid;border-color:#474747 #c6c6c6 #c6c6c6 #474747;box-sizing:border-box"></div>
<div class="t s" style="left:236.79999999999998px;top:459.40px;font-size:12.7px;line-height:16px;color:#333;">2023-08-15 00:00</div>
<div class="r" style="left:342px;top:457.30px;width:58.39999999999998px;height:19.600000000000023px;border:1px solid;border-color:#474747 #c6c6c6 #c6c6c6 #474747;box-sizing:border-box"></div>
<div class="t s" style="left:344.2px;top:459.40px;font-size:12.7px;line-height:16px;color:#333;"><span class="k" style="width:48.80px;font-size:16.51px">구름많음</span></div>
<div class="r" style="left:402px;top:457.30px;width:54.19999999999999px;height:19.600000000000023px;border:1px solid;border-color:#474747 #c6c6c6 #c6c6c6 #474747;box-sizing:border-box"></div>
<div class="t s" style="left:404.2px;top:459.40px;font-size:12.7px;line-height:16px;color:#333;">33</div>
<div class="r" style="left:458.1px;top:457.30px;width:16.69999999999999px;height:19.600000000000023px;border:1px solid;border-color:#474747 #c6c6c6 #c6c6c6 #474747;box-sizing:border-box"></div>
<div class="t s" style="left:460.3px;top:459.40px;font-size:12.7px;line-height:16px;color:#333;">25</div>
<div class="r" style="left:115.4px;top:478.85px;width:117.0px;height:19.600000000000023px;border:1px solid;border-color:#474747 #c6c6c6 #c6c6c6 #474747;box-sizing:border-box"></div>
<div class="t s" style="left:117.60000000000001px;top:480.95px;font-size:12.7px;line-height:16px;color:#333;"><span class="k" style="width:109.80px;font-size:16.51px">서울・인천・경기도</span></div>
<div class="r" style="left:234.6px;top:478.85px;width:105.00000000000003px;height:19.600000000000023px;border:1px solid;border-color:#474747 #c6c6c6 #c6c6c6 #474747;box-sizing:border-box"></div>
<div class="t s" style="left:236.79999999999998px;top:480.95px;font-size:12.7px;line-height:16px;color:#333;">2023-08-16 00:00</div>
<div class="r" style="left:342px;top:478.85px;width:58.39999999999998px;height:19.600000000000023px;border:1px solid;border-color:#474747 #c6c6c6 #c6c6c6 #474747;box-sizing:border-box"></div>
<div class="t s" style="left:344.2px;top:480.95px;font-size:12.7px;line-height:16px;color:#333;"><span class="k" style="width:48.80px;font-size:16.51px">구름많음</span></div>
<div class="r" style="left:402px;top:478.85px;width:54.19999999999999px;height:19.600000000000023px;border:1px solid;border-color:#474747 #c6c6c6 #c6c6c6 #474747;box-sizing:border-box"></div>
<div class="t s" style="left:404.2px;top:480.95px;font-size:12.7px;line-height:16px;color:#333;">33</div>
<div class="r" style="left:458.1px;top:478.85px;width:16.69999999999999px;height:19.600000000000023px;border:1px solid;border-color:#474747 #c6c6c6 #c6c6c6 #474747;box-sizing:border-box"></div>
<div class="t s" style="left:460.3px;top:480.95px;font-size:12.7px;line-height:16px;color:#333;">24</div>
<div class="r" style="left:115.4px;top:500.40px;width:117.0px;height:19.600000000000023px;border:1px solid;border-color:#474747 #c6c6c6 #c6c6c6 #474747;box-sizing:border-box"></div>
<div class="t s" style="left:117.60000000000001px;top:502.50px;font-size:12.7px;line-height:16px;color:#333;"><span class="k" style="width:109.80px;font-size:16.51px">서울・인천・경기도</span></div>
<div class="r" style="left:234.6px;top:500.40px;width:105.00000000000003px;height:19.600000000000023px;border:1px solid;border-color:#474747 #c6c6c6 #c6c6c6 #474747;box-sizing:border-box"></div>
<div class="t s" style="left:236.79999999999998px;top:502.50px;font-size:12.7px;line-height:16px;color:#333;">2023-08-17 00:00</div>
<div class="r" style="left:342px;top:500.40px;width:58.39999999999998px;height:19.600000000000023px;border:1px solid;border-color:#474747 #c6c6c6 #c6c6c6 #474747;box-sizing:border-box"></div>
<div class="t s" style="left:344.2px;top:502.50px;font-size:12.7px;line-height:16px;color:#333;"><span class="k" style="width:48.80px;font-size:16.51px">구름많음</span></div>
<div class="r" style="left:402px;top:500.40px;width:54.19999999999999px;height:19.600000000000023px;border:1px solid;border-color:#474747 #c6c6c6 #c6c6c6 #474747;box-sizing:border-box"></div>
<div class="t s" style="left:404.2px;top:502.50px;font-size:12.7px;line-height:16px;color:#333;">33</div>
<div class="r" style="left:458.1px;top:500.40px;width:16.69999999999999px;height:19.600000000000023px;border:1px solid;border-color:#474747 #c6c6c6 #c6c6c6 #474747;box-sizing:border-box"></div>
<div class="t s" style="left:460.3px;top:502.50px;font-size:12.7px;line-height:16px;color:#333;">24</div>
<div class="r" style="left:115.4px;top:521.95px;width:117.0px;height:19.600000000000023px;border:1px solid;border-color:#474747 #c6c6c6 #c6c6c6 #474747;box-sizing:border-box"></div>
<div class="t s" style="left:117.60000000000001px;top:524.05px;font-size:12.7px;line-height:16px;color:#333;">2023-08-10 00:00</div>
<div class="r" style="left:234.6px;top:521.95px;width:105.00000000000003px;height:19.600000000000023px;border:1px solid;border-color:#474747 #c6c6c6 #c6c6c6 #474747;box-sizing:border-box"></div>
<div class="t s" style="left:236.79999999999998px;top:524.05px;font-size:12.7px;line-height:16px;color:#333;"><span class="k" style="width:36.60px;font-size:16.51px">흐리고</span><span class="k" style="width:7.56px"> </span><span class="k" style="width:12.20px;font-size:16.51px">비</span></div>
<div class="r" style="left:342px;top:521.95px;width:58.39999999999998px;height:19.600000000000023px;border:1px solid;border-color:#474747 #c6c6c6 #c6c6c6 #474747;box-sizing:border-box"></div>
<div class="t s" style="left:344.2px;top:524.05px;font-size:12.7px;line-height:16px;color:#333;">29</div>
<div class="r" style="left:402px;top:521.95px;width:54.19999999999999px;height:19.600000000000023px;border:1px solid;border-color:#474747 #c6c6c6 #c6c6c6 #474747;box-sizing:border-box"></div>
<div class="t s" style="left:404.2px;top:524.05px;font-size:12.7px;line-height:16px;color:#333;">25</div>
<div class="r" style="left:115.4px;top:543.50px;width:117.0px;height:19.600000000000023px;border:1px solid;border-color:#474747 #c6c6c6 #c6c6c6 #474747;box-sizing:border-box"></div>
<div class="t s" style="left:117.60000000000001px;top:545.60px;font-size:12.7px;line-height:16px;color:#333;">2023-08-10 12:00</div>
<div class="r" style="left:234.6px;top:543.50px;width:105.00000000000003px;height:19.600000000000023px;border:1px solid;border-color:#474747 #c6c6c6 #c6c6c6 #474747;box-sizing:border-box"></div>
<div class="t s" style="left:236.79999999999998px;top:545.60px;font-size:12.7px;line-height:16px;color:#333;"><span class="k" style="width:36.60px;font-size:16.51px">흐리고</span><span class="k" style="width:7.56px"> </span><span class="k" style="width:12.20px;font-size:16.51px">비</span></div>
<div class="r" style="left:342px;top:543.50px;width:58.39999999999998px;height:19.600000000000023px;border:1px solid;border-color:#474747 #c6c6c6 #c6c6c6 #474747;box-sizing:border-box"></div>
<div class="t s" style="left:344.2px;top:545.60px;font-size:12.7px;line-height:16px;color:#333;">29</div>
<div class="r" style="left:402px;top:543.50px;width:54.19999999999999px;height:19.600000000000023px;border:1px solid;border-color:#474747 #c6c6c6 #c6c6c6 #474747;box-sizing:border-box"></div>
<div class="t s" style="left:404.2px;top:545.60px;font-size:12.7px;line-height:16px;color:#333;">25</div>
<div class="r" style="left:115.4px;top:565.05px;width:117.0px;height:19.600000000000023px;border:1px solid;border-color:#474747 #c6c6c6 #c6c6c6 #474747;box-sizing:border-box"></div>
<div class="t s" style="left:117.60000000000001px;top:567.15px;font-size:12.7px;line-height:16px;color:#333;">2023-08-11 00:00</div>
<div class="r" style="left:234.6px;top:565.05px;width:105.00000000000003px;height:19.600000000000023px;border:1px solid;border-color:#474747 #c6c6c6 #c6c6c6 #474747;box-sizing:border-box"></div>
<div class="t s" style="left:236.79999999999998px;top:567.15px;font-size:12.7px;line-height:16px;color:#333;"><span class="k" style="width:36.60px;font-size:16.51px">흐리고</span><span class="k" style="width:7.56px"> </span><span class="k" style="width:12.20px;font-size:16.51px">비</span></div>
<div class="r" style="left:342px;top:565.05px;width:58.39999999999998px;height:19.600000000000023px;border:1px solid;border-color:#474747 #c6c6c6 #c6c6c6 #474747;box-sizing:border-box"></div>
<div class="t s" style="left:344.2px;top:567.15px;font-size:12.7px;line-height:16px;color:#333;">31</div>
<div class="r" style="left:402px;top:565.05px;width:54.19999999999999px;height:19.600000000000023px;border:1px solid;border-color:#474747 #c6c6c6 #c6c6c6 #474747;box-sizing:border-box"></div>
<div class="t s" style="left:404.2px;top:567.15px;font-size:12.7px;line-height:16px;color:#333;">25</div>
<div class="r" style="left:115.4px;top:586.60px;width:117.0px;height:19.600000000000023px;border:1px solid;border-color:#474747 #c6c6c6 #c6c6c6 #474747;box-sizing:border-box"></div>
<div class="t s" style="left:117.60000000000001px;top:588.70px;font-size:12.7px;line-height:16px;color:#333;">2023-08-11 12:00</div>
<div class="r" style="left:234.6px;top:586.60px;width:105.00000000000003px;height:19.600000000000023px;border:1px solid;border-color:#474747 #c6c6c6 #c6c6c6 #474747;box-sizing:border-box"></div>
<div class="t s" style="left:236.79999999999998px;top:588.70px;font-size:12.7px;line-height:16px;color:#333;"><span class="k" style="width:24.40px;font-size:16.51px">흐림</span></div>
<div class="r" style="left:342px;top:586.60px;width:58.39999999999998px;height:19.600000000000023px;border:1px solid;border-color:#474747 #c6c6c6 #c6c6c6 #474747;box-sizing:border-box"></div>
<div class="t s" style="left:344.2px;top:588.70px;font-size:12.7px;line-height:16px;color:#333;">31</div>
<div class="r" style="left:402px;top:586.60px;width:54.19999999999999px;height:19.600000000000023px;border:1px solid;border-color:#474747 #c6c6c6 #c6c6c6 #474747;box-sizing:border-box"></div>
<div class="t s" style="left:404.2px;top:588.70px;font-size:12.7px;line-height:16px;color:#333;">25</div>
<div class="r" style="left:115.4px;top:608.15px;width:117.0px;height:19.600000000000023px;border:1px solid;border-color:#474747 #c6c6c6 #c6c6c6 #474747;box-sizing:border-box"></div>
<div class="t s" style="left:117.60000000000001px;top:610.25px;font-size:12.7px;line-height:16px;color:#333;">2023-08-12 00:00</div>
<div class="r" style="left:234.6px;top:608.15px;width:105.00000000000003px;height:19.600000000000023px;border:1px solid;border-color:#474747 #c6c6c6 #c6c6c6 #474747;box-sizing:border-box"></div>
<div class="t s" style="left:236.79999999999998px;top:610.25px;font-size:12.7px;line-height:16px;color:#333;"><span class="k" style="width:48.80px;font-size:16.51px">구름많음</span></div>
<div class="r" style="left:342px;top:608.15px;width:58.39999999999998px;height:19.600000000000023px;border:1px solid;border-color:#474747 #c6c6c6 #c6c6c6 #474747;box-sizing:border-box"></div>
<div class="t s" style="left:344.2px;top:610.25px;font-size:12.7px;line-height:16px;color:#333;">32</div>
<div class="r" style="left:402px;top:608.15px;width:54.19999999999999px;height:19.600000000000023px;border:1px solid;border-color:#474747 #c6c6c6 #c6c6c6 #474747;box-sizing:border-box"></div>
<div class="t s" style="left:404.2px;top:610.25px;font-size:12.7px;line-height:16px;color:#333;">25</div>
<div class="r" style="left:115.4px;top:629.70px;width:117.0px;height:19.600000000000023px;border:1px solid;border-color:#474747 #c6c6c6 #c6c6c6 #474747;box-sizing:border-box"></div>
<div class="t s" style="left:117.60000000000001px;top:631.80px;font-size:12.7px;line-height:16px;color:#333;">2023-08-12 12:00</div>
<div class="r" style="left:234.6px;top:629.70px;width:105.00000000000003px;height:19.600000000000023px;border:1px solid;border-color:#474747 #c6c6c6 #c6c6c6 #474747;box-sizing:border-box"></div>
<div class="t s" style="left:236.79999999999998px;top:631.80px;font-size:12.7px;line-height:16px;color:#333;"><span class="k" style="width:48.80px;font-size:16.51px">구름많음</span></div>
<div class="r" style="left:342px;top:629.70px;width:58.39999999999998px;height:19.600000000000023px;border:1px solid;border-color:#474747 #c6c6c6 #c6c6c6 #474747;box-sizing:border-box"></div>
<div class="t s" style="left:344.2px;top:631.80px;font-size:12.7px;line-height:16px;color:#333;">32</div>
<div class="r" style="left:402px;top:629.70px;width:54.19999999999999px;height:19.600000000000023px;border:1px solid;border-color:#474747 #c6c6c6 #c6c6c6 #474747;box-sizing:border-box"></div>
<div class="t s" style="left:404.2px;top:631.80px;font-size:12.7px;line-height:16px;color:#333;">25</div>
<div class="r" style="left:115.4px;top:651.25px;width:117.0px;height:19.600000000000023px;border:1px solid;border-color:#474747 #c6c6c6 #c6c6c6 #474747;box-sizing:border-box"></div>
<div class="t s" style="left:117.60000000000001px;top:653.35px;font-size:12.7px;line-height:16px;color:#333;">2023-08-13 00:00</div>
<div class="r" style="left:234.6px;top:651.25px;width:105.00000000000003px;height:19.600000000000023px;border:1px solid;border-color:#474747 #c6c6c6 #c6c6c6 #474747;box-sizing:border-box"></div>
<div class="t s" style="left:236.79999999999998px;top:653.35px;font-size:12.7px;line-height:16px;color:#333;"><span class="k" style="width:48.80px;font-size:16.51px">구름많음</span></div>
<div class="r" style="left:342px;top:651.25px;width:58.39999999999998px;height:19.600000000000023px;border:1px solid;border-color:#474747 #c6c6c6 #c6c6c6 #474747;box-sizing:border-box"></div>
<div class="t s" style="left:344.2px;top:653.35px;font-size:12.7px;line-height:16px;color:#333;">31</div>
<div class="r" style="left:402px;top:651.25px;width:54.19999999999999px;height:19.600000000000023px;border:1px solid;border-color:#474747 #c6c6c6 #c6c6c6 #474747;box-sizing:border-box"></div>
<div class="t s" style="left:404.2px;top:653.35px;font-size:12.7px;line-height:16px;color:#333;">25</div>
<div class="r" style="left:115.4px;top:672.80px;width:117.0px;height:19.600000000000023px;border:1px solid;border-color:#474747 #c6c6c6 #c6c6c6 #474747;box-sizing:border-box"></div>
<div class="t s" style="left:117.60000000000001px;top:674.90px;font-size:12.7px;line-height:16px;color:#333;">2023-08-13 12:00</div>
<div class="r" style="left:234.6px;top:672.80px;width:105.00000000000003px;height:19.600000000000023px;border:1px solid;border-color:#474747 #c6c6c6 #c6c6c6 #474747;box-sizing:border-box"></div>
<div class="t s" style="left:236.79999999999998px;top:674.90px;font-size:12.7px;line-height:16px;color:#333;"><span class="k" style="width:48.80px;font-size:16.51px">구름많음</span></div>
<div class="r" style="left:342px;top:672.80px;width:58.39999999999998px;height:19.600000000000023px;border:1px solid;border-color:#474747 #c6c6c6 #c6c6c6 #474747;box-sizing:border-box"></div>
<div class="t s" style="left:344.2px;top:674.90px;font-size:12.7px;line-height:16px;color:#333;">31</div>
<div class="r" style="left:402px;top:672.80px;width:54.19999999999999px;height:19.600000000000023px;border:1px solid;border-color:#474747 #c6c6c6 #c6c6c6 #474747;box-sizing:border-box"></div>
<div class="t s" style="left:404.2px;top:674.90px;font-size:12.7px;line-height:16px;color:#333;">25</div>
<div class="r" style="left:115.4px;top:694.35px;width:117.0px;height:19.600000000000023px;border:1px solid;border-color:#474747 #c6c6c6 #c6c6c6 #474747;box-sizing:border-box"></div>
<div class="t s" style="left:117.60000000000001px;top:696.45px;font-size:12.7px;line-height:16px;color:#333;">2023-08-14 00:00</div>
<div class="r" style="left:234.6px;top:694.35px;width:105.00000000000003px;height:19.600000000000023px;border:1px solid;border-color:#474747 #c6c6c6 #c6c6c6 #474747;box-sizing:border-box"></div>
<div class="t s" style="left:236.79999999999998px;top:696.45px;font-size:12.7px;line-height:16px;color:#333;"><span class="k" style="width:48.80px;font-size:16.51px">구름많음</span></div>
<div class="r" style="left:342px;top:694.35px;width:58.39999999999998px;height:19.600000000000023px;border:1px solid;border-color:#474747 #c6c6c6 #c6c6c6 #474747;box-sizing:border-box"></div>
<div class="t s" style="left:344.2px;top:696.45px;font-size:12.7px;line-height:16px;color:#333;">31</div>
<div class="r" style="left:402px;top:694.35px;width:54.19999999999999px;height:19.600000000000023px;border:1px solid;border-color:#474747 #c6c6c6 #c6c6c6 #474747;box-sizing:border-box"></div>
<div class="t s" style="left:404.2px;top:696.45px;font-size:12.7px;line-height:16px;color:#333;">25</div>
<div class="r" style="left:115.4px;top:715.90px;width:117.0px;height:19.600000000000023px;border:1px solid;border-color:#474747 #c6c6c6 #c6c6c6 #474747;box-sizing:border-box"></div>
<div class="t s" style="left:117.60000000000001px;top:718.00px;font-size:12.7px;line-height:16px;color:#333;">2023-08-14 12:00</div>
<div class="r" style="left:234.6px;top:715.90px;width:105.00000000000003px;height:19.600000000000023px;border:1px solid;border-color:#474747 #c6c6c6 #c6c6c6 #474747;box-sizing:border-box"></div>
<div class="t s" style="left:236.79999999999998px;top:718.00px;font-size:12.7px;line-height:16px;color:#333;"><span class="k" style="width:48.80px;font-size:16.51px">구름많음</span></div>
<div class="r" style="left:342px;top:715.90px;width:58.39999999999998px;height:19.600000000000023px;border:1px solid;border-color:#474747 #c6c6c6 #c6c6c6 #474747;box-sizing:border-box"></div>
<div class="t s" style="left:344.2px;top:718.00px;font-size:12.7px;line-height:16px;color:#333;">31</div>
<div class="r" style="left:402px;top:715.90px;width:54.19999999999999px;height:19.600000000000023px;border:1px solid;border-color:#474747 #c6c6c6 #c6c6c6 #474747;box-sizing:border-box"></div>
<div class="t s" style="left:404.2px;top:718.00px;font-size:12.7px;line-height:16px;color:#333;">25</div>
</div>
<div class="r" style="left:720.5px;top:75px;width:13.5px;height:712px;background:#f1f1f1"></div>
<svg class="r" style="left:722px;top:78px;" width="10" height="7" viewBox="0 0 10 7"><path d="M1.5 5.5 L5 2 L8.5 5.5 Z" fill="#a3a3a3"/></svg>
<div class="r" style="left:722px;top:88.7px;width:10px;height:299.3px;background:#c1c1c1"></div>
<div class="r" style="left:734px;top:75px;width:727px;height:712px;background:#fff;border-left:1px solid #e2e2e2;box-sizing:border-box"></div>
<svg class="r" style="left:741px;top:81.5px;" width="13" height="13" viewBox="0 0 13 13"><circle cx="6.5" cy="6.5" r="5.6" stroke="#1a73e8" stroke-width="1.1" fill="none"/><rect x="6" y="5.3" width="1.1" height="4.5" fill="#1a73e8"/><rect x="6" y="3.2" width="1.1" height="1.1" fill="#1a73e8"/></svg>
<div class="t s" style="left:758.7px;top:81.70px;font-size:9.26px;line-height:12px;color:#202124;">DevTools is now available in Korean!</div>
<div class="r" style="left:915.3px;top:78px;width:151.4px;height:19px;background:#1a73e8;border-radius:3px"></div>
<div class="t s" style="left:918.8px;top:82.60px;font-size:8.75px;line-height:12px;color:#fff;font-weight:bold">Always match Chrome’s language</div>
<div class="r" style="left:1070px;top:78px;width:120.6px;height:19px;background:#1a73e8;border-radius:3px"></div>
<div class="t s" style="left:1073px;top:82.60px;font-size:8.9px;line-height:12px;color:#fff;font-weight:bold">Switch DevTools to Korean</div>
<div class="r" style="left:1194.3px;top:78px;width:83px;height:19px;background:#fff;border:1px solid #dadce0;border-radius:3px;box-sizing:border-box"></div>
<div class="t s" style="left:1198.3px;top:82.30px;font-size:9.6px;line-height:12px;color:#444;">Don’t show again</div>
<div class="r" style="left:735px;top:100px;width:726px;height:1px;background:#e4e4e4"></div>
<div class="r" style="left:735px;top:101px;width:726px;height:21.5px;background:#f1f1f1"></div>
<div class="r" style="left:735px;top:122px;width:726px;height:1px;background:#cdcdcd"></div>
<svg class="r" style="left:740px;top:104px;" width="15" height="15" viewBox="0 0 15 15"><path d="M2 2.6 H13" stroke="#606060" stroke-width="1" stroke-dasharray="1.2 1" fill="none"/><path d="M2 2.6 V12.6" stroke="#606060" stroke-width="1" stroke-dasharray="1.2 1.3" fill="none"/><path d="M12.6 2.6 V5.6" stroke="#606060" stroke-width="1"/><path d="M6.6 7.4 L12.4 13" stroke="#606060" stroke-width="1.4"/><path d="M6.3 7 H10.5 M6.6 7 V11.2" stroke="#606060" stroke-width="1.3" fill="none"/></svg>
<svg class="r" style="left:762px;top:105px;" width="16" height="13" viewBox="0 0 16 13"><path d="M3 11 V2.2 H12.8" stroke="#606060" stroke-width="1.2" fill="none"/><path d="M0.8 11 H7.3" stroke="#606060" stroke-width="1.3"/><rect x="9.5" y="5" width="4.4" height="6.2" stroke="#606060" stroke-width="1.3" fill="none"/></svg>
<div class="r" style="left:784px;top:105px;width:1px;height:14px;background:#d6d6d6"></div>
<div class="t s" style="left:799px;top:107.00px;font-size:9.3px;line-height:12px;color:#202124;">Elements</div>
<div class="t s" style="left:855px;top:107.00px;font-size:9.3px;line-height:12px;color:#5f6368;">Console</div>
<div class="t s" style="left:907.8px;top:107.00px;font-size:9.3px;line-height:12px;color:#5f6368;">Sources</div>
<div class="t s" style="left:959.6px;top:107.00px;font-size:9.3px;line-height:12px;color:#5f6368;">Network</div>
<div class="t s" style="left:1014.8px;top:107.00px;font-size:9.3px;line-height:12px;color:#5f6368;">Performance</div>
<div class="t s" style="left:1086.6px;top:107.00px;font-size:9.3px;line-height:12px;color:#5f6368;">Memory</div>
<div class="t s" style="left:1140.8px;top:107.00px;font-size:9.3px;line-height:12px;color:#5f6368;">Application</div>
<div class="t s" style="left:1207.6px;top:107.00px;font-size:9.3px;line-height:12px;color:#5f6368;">Security</div>
<div class="t s" style="left:1268.5px;top:107.00px;font-size:9.3px;line-height:12px;color:#5f6368;">Lighthouse</div>
<div class="t s" style="left:1334.5px;top:107.00px;font-size:9.3px;line-height:12px;color:#5f6368;">Recorder</div>
<div class="r" style="left:789.5px;top:120.5px;width:56.5px;height:2px;background:#1a73e8"></div>
<svg class="r" style="left:1375px;top:106px;" width="11" height="12" viewBox="0 0 11 12"><path d="M3.5 1 H7.5 M4.3 1 V5 L1 11 H10 L6.7 5 V1" stroke="#5f6368" stroke-width="1" fill="none"/></svg>
<svg class="r" style="left:1405px;top:107px;" width="12" height="10" viewBox="0 0 12 10"><path d="M1.5 1.5 L5 5 L1.5 8.5 M6.5 1.5 L10 5 L6.5 8.5" stroke="#5f6368" stroke-width="1.1" fill="none"/></svg>
<div class="r" style="left:1444px;top:104.5px;width:1px;height:14px;background:#cdcdcd"></div>
<svg class="r" style="left:1453px;top:105.5px;" width="13" height="13" viewBox="0 0 13 13"><circle cx="6.5" cy="6.5" r="4.2" stroke="#5f6368" stroke-width="2.6" fill="none" stroke-dasharray="2.2 1.1"/><circle cx="6.5" cy="6.5" r="2" fill="#f1f1f1"/><circle cx="6.5" cy="6.5" r="4.6" stroke="#5f6368" stroke-width="1.2" fill="none"/></svg>
<div class="r" style="left:735px;top:123px;width:508.6px;height:476px;overflow:hidden">
<div class="r" style="left:0;top:271.80px;width:600px;height:14.2px;background:#d3e6f7"></div>
<div class="t s" style="left:1.5px;top:271.80px;font-size:9px;line-height:12px;color:#555;font-weight:bold">···</div>
<div class="t m" style="left:30.30px;top:-2.20px;font-size:8.67px;line-height:14px"><span style="color:#777">&lt;</span><span style="color:#7b3f78">hr</span><span style="color:#777">&gt;</span></div>
<div class="t m" style="left:30.30px;top:11.60px;font-size:8.67px;line-height:14px"><span style="color:#236e25">&lt;!-- <span class="k kc" style="width:18.90px;font-family:Liberation Sans,sans-serif;font-size:12.4px">문제</span>1. sfc_web_map.xml <span class="k kc" style="width:28.35px;font-family:Liberation Sans,sans-serif;font-size:12.4px">읽어서</span><span class="k kc" style="width:5.86px"> </span><span class="k kc" style="width:37.80px;font-family:Liberation Sans,sans-serif;font-size:12.4px">테이블로</span><span class="k kc" style="width:5.86px"> </span><span class="k kc" style="width:37.80px;font-family:Liberation Sans,sans-serif;font-size:12.4px">표시하기</span>(<span class="k kc" style="width:28.35px;font-family:Liberation Sans,sans-serif;font-size:12.4px">지역명</span>, <span class="k kc" style="width:18.90px;font-family:Liberation Sans,sans-serif;font-size:12.4px">날씨</span>, <span class="k kc" style="width:18.90px;font-family:Liberation Sans,sans-serif;font-size:12.4px">온도</span>) --&gt;</span></div>
<svg class="r" style="left:23.00px;top:27.40px" width="6" height="7" viewBox="0 0 6 7"><path d="M0.3 0.6 L4.8 3.2 L0.3 5.8 Z" fill="#606060"/></svg>
<div class="t m" style="left:30.30px;top:25.40px;font-size:8.67px;line-height:14px"><span style="color:#777">&lt;</span><span style="color:#7b3f78">div</span><span style="color:#777"> </span><span style="color:#8a6232">class</span><span style="color:#777">=&quot;</span><span style="color:#33339a">wrap5</span><span style="color:#777">&quot;&gt;</span><svg class="dots" width="10.5" height="8" viewBox="0 0 10.5 8"><rect x="0.5" y="0.5" width="9.5" height="7" rx="3.4" fill="#fff" stroke="#cfcfcf" stroke-width="1"/><circle cx="3.2" cy="4.2" r="0.75" fill="#777"/><circle cx="5.25" cy="4.2" r="0.75" fill="#777"/><circle cx="7.3" cy="4.2" r="0.75" fill="#777"/></svg><span style="color:#777">&lt;/</span><span style="color:#7b3f78">div</span><span style="color:#777">&gt;</span></div>
<svg class="r" style="left:23.00px;top:41.20px" width="6" height="7" viewBox="0 0 6 7"><path d="M0.3 0.6 L4.8 3.2 L0.3 5.8 Z" fill="#606060"/></svg>
<div class="t m" style="left:30.30px;top:39.20px;font-size:8.67px;line-height:14px"><span style="color:#777">&lt;</span><span style="color:#7b3f78">script</span><span style="color:#777">&gt;</span><svg class="dots" width="10.5" height="8" viewBox="0 0 10.5 8"><rect x="0.5" y="0.5" width="9.5" height="7" rx="3.4" fill="#fff" stroke="#cfcfcf" stroke-width="1"/><circle cx="3.2" cy="4.2" r="0.75" fill="#777"/><circle cx="5.25" cy="4.2" r="0.75" fill="#777"/><circle cx="7.3" cy="4.2" r="0.75" fill="#777"/></svg><span style="color:#777">&lt;/</span><span style="color:#7b3f78">script</span><span style="color:#777">&gt;</span></div>
<div class="t m" style="left:30.30px;top:53.00px;font-size:8.67px;line-height:14px"><span style="color:#777">&lt;</span><span style="color:#7b3f78">hr</span><span style="color:#777">&gt;</span></div>
<div class="t m" style="left:30.30px;top:66.80px;font-size:8.67px;line-height:14px"><span style="color:#236e25">&lt;!-- <span class="k kc" style="width:18.90px;font-family:Liberation Sans,sans-serif;font-size:12.4px">문제</span>2. weather.json <span class="k kc" style="width:28.35px;font-family:Liberation Sans,sans-serif;font-size:12.4px">읽어서</span><span class="k kc" style="width:5.86px"> </span><span class="k kc" style="width:37.80px;font-family:Liberation Sans,sans-serif;font-size:12.4px">테이블로</span><span class="k kc" style="width:5.86px"> </span><span class="k kc" style="width:37.80px;font-family:Liberation Sans,sans-serif;font-size:12.4px">표시하기</span>(<span class="k kc" style="width:28.35px;font-family:Liberation Sans,sans-serif;font-size:12.4px">지역명</span>: &quot;<span class="k kc" style="width:85.05px;font-family:Liberation Sans,sans-serif;font-size:12.4px">서울・인천・경기도</span>&quot;, <span class="k kc" style="width:18.90px;font-family:Liberation Sans,sans-serif;font-size:12.4px">시간</span>, <span class="k kc" style="width:18.90px;font-family:Liberation Sans,sans-serif;font-size:12.4px">날씨</span>, <span class="k kc" style="width:18.90px;font-family:Liberation Sans,sans-serif;font-size:12.4px">최저</span></span></div>
<div class="t m" style="left:30.30px;top:80.60px;font-size:8.67px;line-height:14px"><span style="color:#236e25"><span class="k kc" style="width:18.90px;font-family:Liberation Sans,sans-serif;font-size:12.4px">온도</span>, <span class="k kc" style="width:37.80px;font-family:Liberation Sans,sans-serif;font-size:12.4px">최고온도</span>) --&gt;</span></div>
<svg class="r" style="left:22.00px;top:97.60px" width="7" height="6" viewBox="0 0 7 6"><path d="M0.5 0.3 L6 0.3 L3.25 4.6 Z" fill="#606060"/></svg>
<div class="t m" style="left:30.30px;top:94.40px;font-size:8.67px;line-height:14px"><span style="color:#777">&lt;</span><span style="color:#7b3f78">div</span><span style="color:#777"> </span><span style="color:#8a6232">class</span><span style="color:#777">=&quot;</span><span style="color:#33339a">wrap6</span><span style="color:#777">&quot;&gt;</span></div>
<div class="t m" style="left:40.03px;top:108.20px;font-size:8.67px;line-height:14px"><span style="color:#777">&lt;</span><span style="color:#7b3f78">input</span><span style="color:#777"> </span><span style="color:#8a6232">type</span><span style="color:#777">=&quot;</span><span style="color:#33339a">button</span><span style="color:#777">&quot; </span><span style="color:#8a6232">value</span><span style="color:#777">=&quot;</span><span style="color:#33339a"><span class="k kc" style="width:37.80px;font-family:Liberation Sans,sans-serif;font-size:12.4px">날씨읽기</span></span><span style="color:#777">&quot; </span><span style="color:#8a6232">id</span><span style="color:#777">=&quot;</span><span style="color:#33339a">btn_get_json</span><span style="color:#777">&quot;&gt;</span></div>
<svg class="r" style="left:31.73px;top:125.20px" width="7" height="6" viewBox="0 0 7 6"><path d="M0.5 0.3 L6 0.3 L3.25 4.6 Z" fill="#606060"/></svg>
<div class="t m" style="left:40.03px;top:122.00px;font-size:8.67px;line-height:14px"><span style="color:#777">&lt;</span><span style="color:#7b3f78">div</span><span style="color:#777"> </span><span style="color:#8a6232">id</span><span style="color:#777">=&quot;</span><span style="color:#33339a">weather</span><span style="color:#777">&quot;&gt;</span></div>
<svg class="r" style="left:41.46px;top:139.00px" width="7" height="6" viewBox="0 0 7 6"><path d="M0.5 0.3 L6 0.3 L3.25 4.6 Z" fill="#606060"/></svg>
<div class="t m" style="left:49.76px;top:135.80px;font-size:8.67px;line-height:14px"><span style="color:#777">&lt;</span><span style="color:#7b3f78">table</span><span style="color:#777"> </span><span style="color:#8a6232">border</span><span style="color:#777">=&quot;</span><span style="color:#33339a">1</span><span style="color:#777">&quot;&gt;</span></div>
<svg class="r" style="left:52.19px;top:151.60px" width="6" height="7" viewBox="0 0 6 7"><path d="M0.3 0.6 L4.8 3.2 L0.3 5.8 Z" fill="#606060"/></svg>
<div class="t m" style="left:59.49px;top:149.60px;font-size:8.67px;line-height:14px"><span style="color:#777">&lt;</span><span style="color:#7b3f78">thead</span><span style="color:#777">&gt;</span><svg class="dots" width="10.5" height="8" viewBox="0 0 10.5 8"><rect x="0.5" y="0.5" width="9.5" height="7" rx="3.4" fill="#fff" stroke="#cfcfcf" stroke-width="1"/><circle cx="3.2" cy="4.2" r="0.75" fill="#777"/><circle cx="5.25" cy="4.2" r="0.75" fill="#777"/><circle cx="7.3" cy="4.2" r="0.75" fill="#777"/></svg><span style="color:#777">&lt;/</span><span style="color:#7b3f78">thead</span><span style="color:#777">&gt;</span></div>
<svg class="r" style="left:51.19px;top:166.60px" width="7" height="6" viewBox="0 0 7 6"><path d="M0.5 0.3 L6 0.3 L3.25 4.6 Z" fill="#606060"/></svg>
<div class="t m" style="left:59.49px;top:163.40px;font-size:8.67px;line-height:14px"><span style="color:#777">&lt;</span><span style="color:#7b3f78">tbody</span><span style="color:#777">&gt;</span></div>
<svg class="r" style="left:60.92px;top:180.40px" width="7" height="6" viewBox="0 0 7 6"><path d="M0.5 0.3 L6 0.3 L3.25 4.6 Z" fill="#606060"/></svg>
<div class="t m" style="left:69.22px;top:177.20px;font-size:8.67px;line-height:14px"><span style="color:#777">&lt;</span><span style="color:#7b3f78">tr</span><span style="color:#777">&gt;</span></div>
<div class="t m" style="left:78.95px;top:191.00px;font-size:8.67px;line-height:14px"><span style="color:#777">&lt;</span><span style="color:#7b3f78">td</span><span style="color:#777"> </span><span style="color:#8a6232">id</span><span style="color:#777">=&quot;</span><span style="color:#33339a">first_row</span><span style="color:#777">&quot; </span><span style="color:#8a6232">rowspan</span><span style="color:#777">=&quot;</span><span style="color:#33339a">78</span><span style="color:#777">&quot;&gt;</span><span style="color:#3a3a3a"><span class="k kc" style="width:85.05px;font-family:Liberation Sans,sans-serif;font-size:12.4px">서울・인천・경기도</span></span><span style="color:#777">&lt;/</span><span style="color:#7b3f78">td</span><span style="color:#777">&gt;</span></div>
<div class="t m" style="left:78.95px;top:204.80px;font-size:8.67px;line-height:14px"><span style="color:#777">&lt;</span><span style="color:#7b3f78">td</span><span style="color:#777">&gt;</span><span style="color:#3a3a3a">2023-08-10 00:00</span><span style="color:#777">&lt;/</span><span style="color:#7b3f78">td</span><span style="color:#777">&gt;</span></div>
<div class="t m" style="left:78.95px;top:218.60px;font-size:8.67px;line-height:14px"><span style="color:#777">&lt;</span><span style="color:#7b3f78">td</span><span style="color:#777">&gt;</span><span style="color:#3a3a3a"><span class="k kc" style="width:28.35px;font-family:Liberation Sans,sans-serif;font-size:12.4px">흐리고</span><span class="k kc" style="width:5.86px"> </span><span class="k kc" style="width:9.45px;font-family:Liberation Sans,sans-serif;font-size:12.4px">비</span></span><span style="color:#777">&lt;/</span><span style="color:#7b3f78">td</span><span style="color:#777">&gt;</span></div>
<div class="t m" style="left:78.95px;top:232.40px;font-size:8.67px;line-height:14px"><span style="color:#777">&lt;</span><span style="color:#7b3f78">td</span><span style="color:#777">&gt;</span><span style="color:#3a3a3a">29</span><span style="color:#777">&lt;/</span><span style="color:#7b3f78">td</span><span style="color:#777">&gt;</span></div>
<div class="t m" style="left:78.95px;top:246.20px;font-size:8.67px;line-height:14px"><span style="color:#777">&lt;</span><span style="color:#7b3f78">td</span><span style="color:#777">&gt;</span><span style="color:#3a3a3a">26</span><span style="color:#777">&lt;/</span><span style="color:#7b3f78">td</span><span style="color:#777">&gt;</span></div>
<div class="t m" style="left:69.22px;top:260.00px;font-size:8.67px;line-height:14px"><span style="color:#777">&lt;/</span><span style="color:#7b3f78">tr</span><span style="color:#777">&gt;</span></div>
<svg class="r" style="left:60.92px;top:277.00px" width="7" height="6" viewBox="0 0 7 6"><path d="M0.5 0.3 L6 0.3 L3.25 4.6 Z" fill="#606060"/></svg>
<div class="t m" style="left:69.22px;top:273.80px;font-size:8.67px;line-height:14px"><span style="color:#777">&lt;</span><span style="color:#7b3f78">tr</span><span style="color:#777">&gt;</span><span style="color:#777;font-style:italic"> == $0</span></div>
<div class="t m" style="left:78.95px;top:287.60px;font-size:8.67px;line-height:14px"><span style="color:#777">&lt;</span><span style="color:#7b3f78">td</span><span style="color:#777"> </span><span style="color:#8a6232">id</span><span style="color:#777">=&quot;</span><span style="color:#33339a">first_row</span><span style="color:#777">&quot;&gt;</span><span style="color:#3a3a3a"><span class="k kc" style="width:85.05px;font-family:Liberation Sans,sans-serif;font-size:12.4px">서울・인천・경기도</span></span><span style="color:#777">&lt;/</span><span style="color:#7b3f78">td</span><span style="color:#777">&gt;</span></div>
<div class="t m" style="left:78.95px;top:301.40px;font-size:8.67px;line-height:14px"><span style="color:#777">&lt;</span><span style="color:#7b3f78">td</span><span style="color:#777">&gt;</span><span style="color:#3a3a3a">2023-08-10 12:00</span><span style="color:#777">&lt;/</span><span style="color:#7b3f78">td</span><span style="color:#777">&gt;</span></div>
<div class="t m" style="left:78.95px;top:315.20px;font-size:8.67px;line-height:14px"><span style="color:#777">&lt;</span><span style="color:#7b3f78">td</span><span style="color:#777">&gt;</span><span style="color:#3a3a3a"><span class="k kc" style="width:28.35px;font-family:Liberation Sans,sans-serif;font-size:12.4px">흐리고</span><span class="k kc" style="width:5.86px"> </span><span class="k kc" style="width:9.45px;font-family:Liberation Sans,sans-serif;font-size:12.4px">비</span></span><span style="color:#777">&lt;/</span><span style="color:#7b3f78">td</span><span style="color:#777">&gt;</span></div>
<div class="t m" style="left:78.95px;top:329.00px;font-size:8.67px;line-height:14px"><span style="color:#777">&lt;</span><span style="color:#7b3f78">td</span><span style="color:#777">&gt;</span><span style="color:#3a3a3a">29</span><span style="color:#777">&lt;/</span><span style="color:#7b3f78">td</span><span style="color:#777">&gt;</span></div>
<div class="t m" style="left:78.95px;top:342.80px;font-size:8.67px;line-height:14px"><span style="color:#777">&lt;</span><span style="color:#7b3f78">td</span><span style="color:#777">&gt;</span><span style="color:#3a3a3a">26</span><span style="color:#777">&lt;/</span><span style="color:#7b3f78">td</span><span style="color:#777">&gt;</span></div>
<div class="t m" style="left:69.22px;top:356.60px;font-size:8.67px;line-height:14px"><span style="color:#777">&lt;/</span><span style="color:#7b3f78">tr</span><span style="color:#777">&gt;</span></div>
<svg class="r" style="left:61.92px;top:372.40px" width="6" height="7" viewBox="0 0 6 7"><path d="M0.3 0.6 L4.8 3.2 L0.3 5.8 Z" fill="#606060"/></svg>
<div class="t m" style="left:69.22px;top:370.40px;font-size:8.67px;line-height:14px"><span style="color:#777">&lt;</span><span style="color:#7b3f78">tr</span><span style="color:#777">&gt;</span><svg class="dots" width="10.5" height="8" viewBox="0 0 10.5 8"><rect x="0.5" y="0.5" width="9.5" height="7" rx="3.4" fill="#fff" stroke="#cfcfcf" stroke-width="1"/><circle cx="3.2" cy="4.2" r="0.75" fill="#777"/><circle cx="5.25" cy="4.2" r="0.75" fill="#777"/><circle cx="7.3" cy="4.2" r="0.75" fill="#777"/></svg><span style="color:#777">&lt;/</span><span style="color:#7b3f78">tr</span><span style="color:#777">&gt;</span></div>
<svg class="r" style="left:61.92px;top:386.20px" width="6" height="7" viewBox="0 0 6 7"><path d="M0.3 0.6 L4.8 3.2 L0.3 5.8 Z" fill="#606060"/></svg>
<div class="t m" style="left:69.22px;top:384.20px;font-size:8.67px;line-height:14px"><span style="color:#777">&lt;</span><span style="color:#7b3f78">tr</span><span style="color:#777">&gt;</span><svg class="dots" width="10.5" height="8" viewBox="0 0 10.5 8"><rect x="0.5" y="0.5" width="9.5" height="7" rx="3.4" fill="#fff" stroke="#cfcfcf" stroke-width="1"/><circle cx="3.2" cy="4.2" r="0.75" fill="#777"/><circle cx="5.25" cy="4.2" r="0.75" fill="#777"/><circle cx="7.3" cy="4.2" r="0.75" fill="#777"/></svg><span style="color:#777">&lt;/</span><span style="color:#7b3f78">tr</span><span style="color:#777">&gt;</span></div>
<svg class="r" style="left:61.92px;top:400.00px" width="6" height="7" viewBox="0 0 6 7"><path d="M0.3 0.6 L4.8 3.2 L0.3 5.8 Z" fill="#606060"/></svg>
<div class="t m" style="left:69.22px;top:398.00px;font-size:8.67px;line-height:14px"><span style="color:#777">&lt;</span><span style="color:#7b3f78">tr</span><span style="color:#777">&gt;</span><svg class="dots" width="10.5" height="8" viewBox="0 0 10.5 8"><rect x="0.5" y="0.5" width="9.5" height="7" rx="3.4" fill="#fff" stroke="#cfcfcf" stroke-width="1"/><circle cx="3.2" cy="4.2" r="0.75" fill="#777"/><circle cx="5.25" cy="4.2" r="0.75" fill="#777"/><circle cx="7.3" cy="4.2" r="0.75" fill="#777"/></svg><span style="color:#777">&lt;/</span><span style="color:#7b3f78">tr</span><span style="color:#777">&gt;</span></div>
<svg class="r" style="left:61.92px;top:413.80px" width="6" height="7" viewBox="0 0 6 7"><path d="M0.3 0.6 L4.8 3.2 L0.3 5.8 Z" fill="#606060"/></svg>
<div class="t m" style="left:69.22px;top:411.80px;font-size:8.67px;line-height:14px"><span style="color:#777">&lt;</span><span style="color:#7b3f78">tr</span><span style="color:#777">&gt;</span><svg class="dots" width="10.5" height="8" viewBox="0 0 10.5 8"><rect x="0.5" y="0.5" width="9.5" height="7" rx="3.4" fill="#fff" stroke="#cfcfcf" stroke-width="1"/><circle cx="3.2" cy="4.2" r="0.75" fill="#777"/><circle cx="5.25" cy="4.2" r="0.75" fill="#777"/><circle cx="7.3" cy="4.2" r="0.75" fill="#777"/></svg><span style="color:#777">&lt;/</span><span style="color:#7b3f78">tr</span><span style="color:#777">&gt;</span></div>
<svg class="r" style="left:61.92px;top:427.60px" width="6" height="7" viewBox="0 0 6 7"><path d="M0.3 0.6 L4.8 3.2 L0.3 5.8 Z" fill="#606060"/></svg>
<div class="t m" style="left:69.22px;top:425.60px;font-size:8.67px;line-height:14px"><span style="color:#777">&lt;</span><span style="color:#7b3f78">tr</span><span style="color:#777">&gt;</span><svg class="dots" width="10.5" height="8" viewBox="0 0 10.5 8"><rect x="0.5" y="0.5" width="9.5" height="7" rx="3.4" fill="#fff" stroke="#cfcfcf" stroke-width="1"/><circle cx="3.2" cy="4.2" r="0.75" fill="#777"/><circle cx="5.25" cy="4.2" r="0.75" fill="#777"/><circle cx="7.3" cy="4.2" r="0.75" fill="#777"/></svg><span style="color:#777">&lt;/</span><span style="color:#7b3f78">tr</span><span style="color:#777">&gt;</span></div>
<svg class="r" style="left:61.92px;top:441.40px" width="6" height="7" viewBox="0 0 6 7"><path d="M0.3 0.6 L4.8 3.2 L0.3 5.8 Z" fill="#606060"/></svg>
<div class="t m" style="left:69.22px;top:439.40px;font-size:8.67px;line-height:14px"><span style="color:#777">&lt;</span><span style="color:#7b3f78">tr</span><span style="color:#777">&gt;</span><svg class="dots" width="10.5" height="8" viewBox="0 0 10.5 8"><rect x="0.5" y="0.5" width="9.5" height="7" rx="3.4" fill="#fff" stroke="#cfcfcf" stroke-width="1"/><circle cx="3.2" cy="4.2" r="0.75" fill="#777"/><circle cx="5.25" cy="4.2" r="0.75" fill="#777"/><circle cx="7.3" cy="4.2" r="0.75" fill="#777"/></svg><span style="color:#777">&lt;/</span><span style="color:#7b3f78">tr</span><span style="color:#777">&gt;</span></div>
<svg class="r" style="left:61.92px;top:455.20px" width="6" height="7" viewBox="0 0 6 7"><path d="M0.3 0.6 L4.8 3.2 L0.3 5.8 Z" fill="#606060"/></svg>
<div class="t m" style="left:69.22px;top:453.20px;font-size:8.67px;line-height:14px"><span style="color:#777">&lt;</span><span style="color:#7b3f78">tr</span><span style="color:#777">&gt;</span><svg class="dots" width="10.5" height="8" viewBox="0 0 10.5 8"><rect x="0.5" y="0.5" width="9.5" height="7" rx="3.4" fill="#fff" stroke="#cfcfcf" stroke-width="1"/><circle cx="3.2" cy="4.2" r="0.75" fill="#777"/><circle cx="5.25" cy="4.2" r="0.75" fill="#777"/><circle cx="7.3" cy="4.2" r="0.75" fill="#777"/></svg><span style="color:#777">&lt;/</span><span style="color:#7b3f78">tr</span><span style="color:#777">&gt;</span></div>
<svg class="r" style="left:61.92px;top:469.00px" width="6" height="7" viewBox="0 0 6 7"><path d="M0.3 0.6 L4.8 3.2 L0.3 5.8 Z" fill="#606060"/></svg>
<div class="t m" style="left:69.22px;top:467.00px;font-size:8.67px;line-height:14px"><span style="color:#777">&lt;</span><span style="color:#7b3f78">tr</span><span style="color:#777">&gt;</span><svg class="dots" width="10.5" height="8" viewBox="0 0 10.5 8"><rect x="0.5" y="0.5" width="9.5" height="7" rx="3.4" fill="#fff" stroke="#cfcfcf" stroke-width="1"/><circle cx="3.2" cy="4.2" r="0.75" fill="#777"/><circle cx="5.25" cy="4.2" r="0.75" fill="#777"/><circle cx="7.3" cy="4.2" r="0.75" fill="#777"/></svg><span style="color:#777">&lt;/</span><span style="color:#7b3f78">tr</span><span style="color:#777">&gt;</span></div>
</div>
<div class="r" style="left:1243.6px;top:123px;width:13px;height:476px;background:#f1f1f1"></div>
<svg class="r" style="left:1245px;top:126px;" width="10" height="7" viewBox="0 0 10 7"><path d="M1.5 5.5 L5 2 L8.5 5.5 Z" fill="#505050"/></svg>
<div class="r" style="left:1244.6px;top:195px;width:10.4px;height:120px;background:#c1c1c1"></div>
<svg class="r" style="left:1245px;top:588px;" width="10" height="7" viewBox="0 0 10 7"><path d="M1.5 1.5 L5 5 L8.5 1.5 Z" fill="#505050"/></svg>
<div class="r" style="left:1256.6px;top:122.5px;width:1px;height:495px;background:#cdcdcd"></div>
<div class="r" style="left:735px;top:599px;width:521.5999999999999px;height:1px;background:#cdcdcd"></div>
<div class="t s" style="left:740.5px;top:602.60px;font-size:9.3px;line-height:12px;color:#7d4a7d;">html</div>
<div class="t s" style="left:769.6px;top:602.60px;font-size:9.3px;line-height:12px;color:#7d4a7d;">body</div>
<div class="t s" style="left:803.2px;top:602.6px;font-size:9.3px;line-height:12px"><span style="color:#7d4a7d">div</span><span style="color:#a8722e">.wrap6</span></div>
<div class="t s" style="left:854.8px;top:602.6px;font-size:9.3px;line-height:12px"><span style="color:#7d4a7d">div</span><span style="color:#a8722e">#weather</span></div>
<div class="t s" style="left:916.8px;top:602.60px;font-size:9.3px;line-height:12px;color:#7d4a7d;">table</div>
<div class="t s" style="left:948.4px;top:602.60px;font-size:9.3px;line-height:12px;color:#7d4a7d;">tbody</div>
<div class="r" style="left:984px;top:601px;width:13px;height:15px;background:#eaeaea"></div>
<div class="t s" style="left:986px;top:602.60px;font-size:9.3px;line-height:12px;color:#7d4a7d;">tr</div>
<div class="r" style="left:735px;top:617.5px;width:726px;height:1px;background:#cdcdcd"></div>
<div class="r" style="left:1257.6px;top:123px;width:203.4000000000001px;height:20.5px;background:#f1f1f1"></div>
<div class="r" style="left:1257.6px;top:143.5px;width:203.4000000000001px;height:1px;background:#cdcdcd"></div>
<div class="t s" style="left:1264.5px;top:127.50px;font-size:9.3px;line-height:12px;color:#202124;">Styles</div>
<div class="r" style="left:1257.5px;top:141.8px;width:39.5px;height:2px;background:#1a73e8"></div>
<div class="t s" style="left:1305px;top:127.50px;font-size:9.3px;line-height:12px;color:#5f6368;">Computed</div>
<div class="t s" style="left:1365px;top:127.50px;font-size:9.3px;line-height:12px;color:#5f6368;">Layout</div>
<div class="t s" style="left:1409px;top:127.50px;font-size:9.3px;line-height:12px;color:#5f6368;">Event Listeners</div>
<div class="r" style="left:1257.6px;top:144.5px;width:203.4000000000001px;height:21px;background:#f1f1f1"></div>
<div class="r" style="left:1259px;top:146px;width:109px;height:18px;background:#fff"></div>
<div class="t s" style="left:1263px;top:149.50px;font-size:9.3px;line-height:12px;color:#777;">Filter</div>
<div class="t m" style="left:1381.5px;top:150.00px;font-size:8.67px;line-height:11px;color:#333;font-weight:bold">:hov</div>
<div class="t m" style="left:1411px;top:150.00px;font-size:8.67px;line-height:11px;color:#333;font-weight:bold">.cls</div>
<svg class="r" style="left:1440px;top:149px;" width="14" height="13" viewBox="0 0 14 13"><path d="M6 1.5 V11.5 M1 6.5 H11" stroke="#333" stroke-width="1.3"/><path d="M13 10 V13 H10 Z" fill="#333"/></svg>
<div class="r" style="left:1257.6px;top:165px;width:203.4000000000001px;height:1px;background:#cdcdcd"></div>
<div class="t m" style="left:1260.5px;top:167.50px;font-size:8.67px;line-height:11px;color:#333;">element.style {</div>
<div class="t m" style="left:1260.5px;top:180.50px;font-size:8.67px;line-height:11px;color:#333;">}</div>
<div class="r" style="left:1257.6px;top:194.8px;width:203.4000000000001px;height:1px;background:#cdcdcd"></div>
<div class="t m" style="left:1260.5px;top:197.50px;font-size:8.67px;line-height:11px;color:#222;font-style:italic">tr {</div>
<div class="t m" style="left:1391px;top:197.50px;font-size:8.67px;line-height:11px;color:#555;font-style:italic">user agent stylesheet</div>
<div class="t m" style="left:1274.5px;top:208px;font-size:8.67px;line-height:14px;font-style:italic;color:#c80000">display<span style="color:#222">: table-row;</span></div>
<div class="t m" style="left:1274.5px;top:219.5px;font-size:8.67px;line-height:14px;font-style:italic;color:#c80000">vertical-align<span style="color:#222">: inherit;</span></div>
<div class="t m" style="left:1274.5px;top:230.5px;font-size:8.67px;line-height:14px;font-style:italic;color:#c80000">border-color<span style="color:#222">: <span style="font-style:normal;font-size:7px">▶</span> inherit;</span></div>
<div class="t m" style="left:1260.5px;top:242.50px;font-size:8.67px;line-height:11px;color:#222;font-style:italic">}</div>
<div class="r" style="left:1257.6px;top:256.6px;width:203.4000000000001px;height:1px;background:#cdcdcd"></div>
<div class="r" style="left:1257.6px;top:257.6px;width:203.4000000000001px;height:20px;background:#f1f1f1"></div>
<div class="t s" style="left:1261.5px;top:261.50px;font-size:9.3px;line-height:12px;color:#5f6368;">Inherited from </div>
<div class="t m" style="left:1326px;top:262.50px;font-size:8.67px;line-height:11px;color:#c80000;">table</div>
<div class="r" style="left:1257.6px;top:277.5px;width:203.4000000000001px;height:1px;background:#cdcdcd"></div>
<div class="t m" style="left:1260.5px;top:280.00px;font-size:8.67px;line-height:11px;color:#222;font-style:italic">table {</div>
<div class="t m" style="left:1391px;top:280.00px;font-size:8.67px;line-height:11px;color:#555;font-style:italic">user agent stylesheet</div>
<div class="t m" style="left:1274.5px;top:290.5px;font-size:8.67px;line-height:14px;font-style:italic;color:#c80000">border-collapse<span style="color:#222">: separate;</span></div>
<div class="t m" style="left:1274.5px;top:301.5px;font-size:8.67px;line-height:14px;font-style:italic;color:#c80000">text-indent<span style="color:#222">: initial;</span></div>
<div class="t m" style="left:1274.5px;top:312.8px;font-size:8.67px;line-height:14px;font-style:italic;color:#c80000">border-spacing<span style="color:#222">: <span style="font-style:normal;font-size:7px">▶</span> 2px;</span></div>
<div class="t m" style="left:1260.5px;top:325.50px;font-size:8.67px;line-height:11px;color:#222;font-style:italic">}</div>
<div class="r" style="left:1257.6px;top:339.5px;width:203.4000000000001px;height:1px;background:#cdcdcd"></div>
<div class="r" style="left:1336.3px;top:400.5px;width:88.5px;height:51px;background:#fbebb8;border:1px solid #222;box-sizing:border-box"></div>
<div class="t s" style="left:1340px;top:405.50px;font-size:7.2px;line-height:9px;color:#222;">border</div>
<div class="t s" style="left:1378px;top:405.50px;font-size:7.2px;line-height:9px;color:#222;">–</div>
<div class="t s" style="left:1340.5px;top:421.00px;font-size:7.2px;line-height:9px;color:#222;">–</div>
<div class="t s" style="left:1415px;top:421.00px;font-size:7.2px;line-height:9px;color:#222;">–</div>
<div class="t s" style="left:1378px;top:438.50px;font-size:7.2px;line-height:9px;color:#222;">–</div>
<div class="r" style="left:1349px;top:417px;width:63.6px;height:17.6px;background:#9cc2d6;border:1px solid #333;box-sizing:border-box"></div>
<div class="t s" style="left:1360px;top:420.80px;font-size:7.4px;line-height:10px;color:#1e3a50;">601.250×25</div>
<div class="r" style="left:735px;top:618.5px;width:726px;height:21px;background:#f1f1f1"></div>
<div class="r" style="left:735px;top:639.5px;width:726px;height:1px;background:#cdcdcd"></div>
<svg class="r" style="left:745px;top:623px;" width="4" height="12" viewBox="0 0 4 12"><circle cx="2" cy="2" r="1.1" fill="#5f6368"/><circle cx="2" cy="6" r="1.1" fill="#5f6368"/><circle cx="2" cy="10" r="1.1" fill="#5f6368"/></svg>
<div class="t s" style="left:764.5px;top:623.50px;font-size:9.3px;line-height:12px;color:#202124;">Console</div>
<div class="r" style="left:757px;top:638px;width:49px;height:2px;background:#1a73e8"></div>
<div class="t s" style="left:814px;top:623.50px;font-size:9.3px;line-height:12px;color:#5f6368;">Issues</div>
<div class="r" style="left:735px;top:640.5px;width:726px;height:20.5px;background:#f1f1f1"></div>
<div class="r" style="left:735px;top:661px;width:726px;height:1px;background:#cdcdcd"></div>
<svg class="r" style="left:741px;top:644.5px;" width="13" height="12" viewBox="0 0 13 12"><rect x="1" y="1" width="10.5" height="10" stroke="#5f6368" stroke-width="1.1" fill="none"/><path d="M4 1 V11" stroke="#5f6368" stroke-width="1.1"/><path d="M6 3.5 L9 6 L6 8.5 Z" fill="#5f6368"/></svg>
<svg class="r" style="left:763px;top:644.5px;" width="13" height="12" viewBox="0 0 13 12"><circle cx="6" cy="6" r="5" stroke="#5f6368" stroke-width="1.1" fill="none"/><path d="M2.5 9.5 L9.5 2.5" stroke="#5f6368" stroke-width="1.1"/></svg>
<div class="r" style="left:784.5px;top:643.5px;width:1px;height:14px;background:#cdcdcd"></div>
<div class="t s" style="left:792px;top:645.50px;font-size:9.3px;line-height:12px;color:#333;">top</div>
<svg class="r" style="left:812px;top:648px;" width="7" height="6" viewBox="0 0 7 6"><path d="M0.5 0.5 H6.5 L3.5 5 Z" fill="#5f6368"/></svg>
<div class="r" style="left:827px;top:643.5px;width:1px;height:14px;background:#cdcdcd"></div>
<svg class="r" style="left:835px;top:646px;" width="15" height="9" viewBox="0 0 15 9"><path d="M1 4.5 Q7.5 -2.5 14 4.5 Q7.5 11.5 1 4.5 Z" stroke="#5f6368" stroke-width="1.1" fill="none"/><circle cx="7.5" cy="4.5" r="2" stroke="#5f6368" stroke-width="1.1" fill="none"/></svg>
<div class="r" style="left:857.5px;top:643.5px;width:1px;height:14px;background:#cdcdcd"></div>
<div class="r" style="left:861.5px;top:642.5px;width:485px;height:17px;background:#fff"></div>
<div class="t s" style="left:866.5px;top:645.50px;font-size:9.3px;line-height:12px;color:#777;">Filter</div>
<div class="t s" style="left:1352px;top:645.50px;font-size:9.3px;line-height:12px;color:#5f6368;">Default levels</div>
<svg class="r" style="left:1410px;top:648px;" width="7" height="6" viewBox="0 0 7 6"><path d="M0.5 0.5 H6.5 L3.5 5 Z" fill="#5f6368"/></svg>
<div class="r" style="left:1425px;top:643.5px;width:1px;height:14px;background:#cdcdcd"></div>
<div class="r" style="left:1429.5px;top:642.5px;width:40px;height:17px;background:#fff;border:1px solid #dadce0;border-radius:2px;box-sizing:border-box"></div>
<div class="t s" style="left:1436px;top:645.50px;font-size:9.3px;line-height:12px;color:#333;">No Issues</div>
<svg class="r" style="left:743px;top:664px;" width="7" height="10" viewBox="0 0 7 10"><path d="M1.5 1.5 L5 5 L1.5 8.5" stroke="#1a73e8" stroke-width="1.2" fill="none"/></svg>
<svg class="r" style="left:345px;top:442px;" width="14" height="22" viewBox="0 0 14 22"><path d="M1 1 V17 L5 13 L8 20 L10.5 19 L7.5 12 H12.5 Z" fill="#fff" stroke="#000" stroke-width="1"/></svg>
<script>(function(){try{var s=document.createElement("span");s.style.cssText="position:absolute;left:-9999px;top:0;font:100px \"Liberation Sans\";white-space:pre";s.textContent="\ud55c\uae00\ud55c";document.body.appendChild(s);var w=s.getBoundingClientRect().width;s.remove();if(w>=280)document.documentElement.className+=" ko";}catch(e){}})();</script>
</body></html>
